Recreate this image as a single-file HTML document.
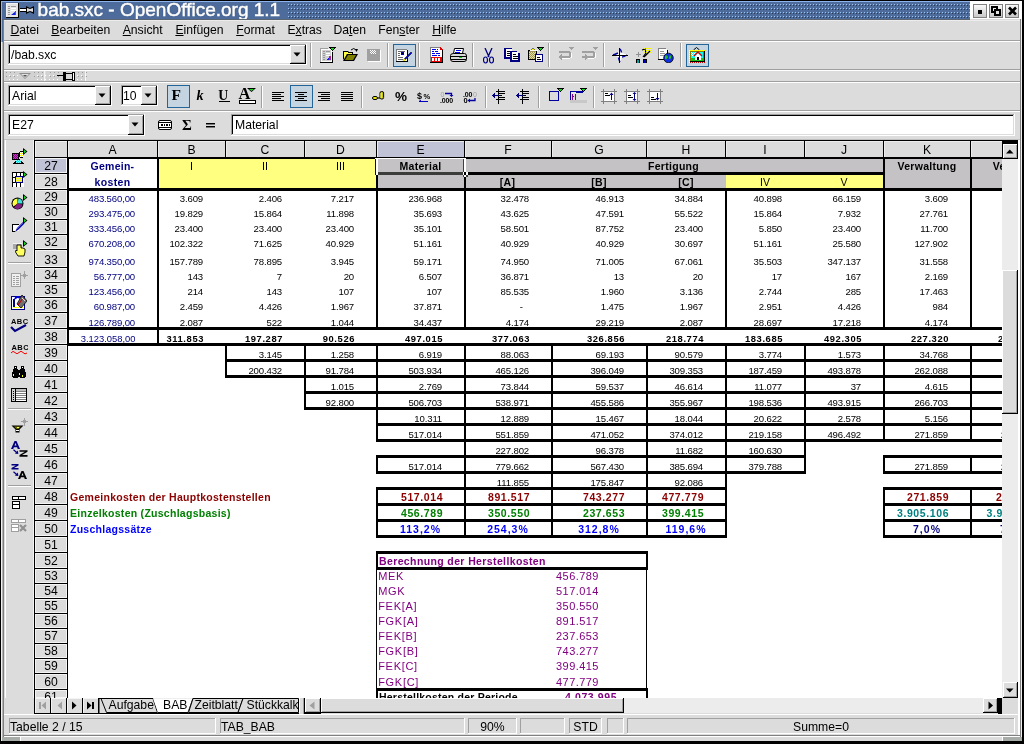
<!DOCTYPE html><html><head><meta charset="utf-8"><style>html,body{margin:0;padding:0;width:1024px;height:744px;overflow:hidden;background:#dcdcdc;}body{position:relative;font-family:"Liberation Sans",sans-serif;}div{position:absolute;box-sizing:border-box;}.t{white-space:nowrap;}u{text-decoration:underline;text-underline-offset:1px;}</style></head><body><div style="left:0;top:0;width:1024px;height:744px;overflow:hidden;will-change:transform;background:#dcdcdc"><div style="left:0px;top:0px;width:1024px;height:744px;background:#dcdcdc;"></div><div style="left:0px;top:0px;width:1024px;height:1px;background:#000;"></div><div style="left:0px;top:0px;width:1px;height:744px;background:#000;"></div><div style="left:1022px;top:0px;width:2px;height:744px;background:#000;"></div><div style="left:0px;top:741px;width:1024px;height:3px;background:#000;"></div><div style="left:1px;top:1px;width:1021px;height:18px;background:#4d6c9c;"></div><div style="left:1px;top:1px;width:1021px;height:1px;background:#8db4ec;"></div><div style="left:1px;top:1px;width:1px;height:41px;background:#8db4ec;"></div><div style="left:2px;top:2px;width:1px;height:40px;background:#4d6c9c;"></div><div style="left:3px;top:19px;width:1px;height:23px;background:#808080;"></div><svg style="position:absolute;left:288px;top:2px" width="682" height="17"><defs><pattern id="dp" x="0" y="0" width="3" height="4" patternUnits="userSpaceOnUse"><rect x="0" y="2" width="1" height="1" fill="#9cc4f4"/><rect x="1" y="3" width="1" height="1" fill="#2c3c58"/></pattern></defs><rect width="682" height="17" fill="url(#dp)"/></svg><svg style="position:absolute;left:5px;top:3px" width="32" height="16"><rect x="1" y="0" width="13" height="15" fill="#000"/><rect x="1" y="0" width="12" height="14" fill="#f4f4f4"/><rect x="2" y="1" width="11" height="13" fill="#e4e4e4"/><rect x="3" y="3" width="2" height="1" fill="#999"/><rect x="6" y="3" width="5" height="1" fill="#999"/><rect x="3" y="5" width="2" height="1" fill="#999"/><rect x="6" y="5" width="5" height="1" fill="#fff"/><rect x="3" y="7" width="2" height="1" fill="#999"/><rect x="6" y="7" width="5" height="1" fill="#fff"/><rect x="3" y="9" width="2" height="1" fill="#999"/><rect x="3" y="11" width="2" height="1" fill="#999"/><path d="M6 12 L11 8 L11 12 Z" fill="#1020e0"/><rect x="10" y="8" width="1" height="4" fill="#c02080"/><rect x="15" y="6" width="6" height="2" fill="#fff"/><rect x="15" y="5" width="6" height="1" fill="#000"/><rect x="15" y="8" width="6" height="1" fill="#000"/><path d="M21 3 L25 5 L29 3 L29 11 L25 9 L21 11 Z" fill="#000"/><path d="M22 5 L25 6 L28 5 L28 9 L25 8 L22 9 Z" fill="#ddd"/></svg><div class="t " style="left:37.6px;top:0.12px;font-size:19.0px;line-height:19.0px;color:#fff;-webkit-text-stroke:0.5px #fff;text-shadow:0 0 1px #1c2c48;">bab.sxc - OpenOffice.org 1.1</div><div style="left:970px;top:1px;width:52px;height:18px;background:#fff;"></div><div style="left:973px;top:4px;width:14px;height:14px;background:#808080;"></div><div style="left:974px;top:5px;width:12px;height:12px;background:linear-gradient(#fafafa,#c8c8c8);"></div><div style="left:989px;top:4px;width:14px;height:14px;background:#808080;"></div><div style="left:990px;top:5px;width:12px;height:12px;background:linear-gradient(#fafafa,#c8c8c8);"></div><div style="left:1005px;top:4px;width:14px;height:14px;background:#808080;"></div><div style="left:1006px;top:5px;width:12px;height:12px;background:linear-gradient(#fafafa,#c8c8c8);"></div><svg style="position:absolute;left:973px;top:4px" width="46" height="14" shape-rendering="crispEdges"><rect x="5" y="6" width="4" height="4" fill="#000"/><path d="M18 2h7v7h-7z M20 4v3h3v-3z" fill="#000" fill-rule="evenodd"/><rect x="21" y="5" width="7" height="7" fill="#000"/><rect x="23" y="7" width="3" height="3" fill="#e0e0e0"/></svg><svg style="position:absolute;left:1007px;top:6px" width="11" height="10"><path d="M2 1.5 L9 8.5 M9 1.5 L2 8.5" stroke="#000" stroke-width="2.6"/></svg><div style="left:4px;top:20px;width:1016px;height:1px;background:#ececec;"></div><div style="left:2px;top:19px;width:968px;height:1px;background:#5c6470;"></div><div style="left:4px;top:40px;width:1016px;height:1px;background:#a0a0a0;"></div><div style="left:4px;top:41px;width:1016px;height:1px;background:#ffffff;"></div><div style="left:1020px;top:19px;width:1px;height:718px;background:#808080;"></div><div style="left:1021px;top:19px;width:1px;height:718px;background:#f0f0f0;"></div><div class="t " style="left:10.5px;top:23.67px;font-size:12.2px;line-height:12.2px;color:#000;"><u>D</u>atei</div><div class="t " style="left:51.3px;top:23.67px;font-size:12.2px;line-height:12.2px;color:#000;"><u>B</u>earbeiten</div><div class="t " style="left:122.7px;top:23.67px;font-size:12.2px;line-height:12.2px;color:#000;"><u>A</u>nsicht</div><div class="t " style="left:175.4px;top:23.67px;font-size:12.2px;line-height:12.2px;color:#000;"><u>E</u>infügen</div><div class="t " style="left:236.2px;top:23.67px;font-size:12.2px;line-height:12.2px;color:#000;"><u>F</u>ormat</div><div class="t " style="left:287.4px;top:23.67px;font-size:12.2px;line-height:12.2px;color:#000;">E<u>x</u>tras</div><div class="t " style="left:333.4px;top:23.67px;font-size:12.2px;line-height:12.2px;color:#000;">Da<u>t</u>en</div><div class="t " style="left:378.3px;top:23.67px;font-size:12.2px;line-height:12.2px;color:#000;">Fen<u>s</u>ter</div><div class="t " style="left:432.2px;top:23.67px;font-size:12.2px;line-height:12.2px;color:#000;"><u>H</u>ilfe</div><div style="left:4px;top:69px;width:1016px;height:1px;background:#a0a0a0;"></div><div style="left:4px;top:70px;width:1016px;height:1px;background:#fff;"></div><div style="left:8px;top:44px;width:299px;height:21px;background:#fff;"></div><div style="left:8px;top:44px;width:298px;height:1px;background:#a0a0a0;"></div><div style="left:8px;top:44px;width:1px;height:20px;background:#a0a0a0;"></div><div style="left:9px;top:45px;width:297px;height:1px;background:#000;"></div><div style="left:9px;top:45px;width:1px;height:19px;background:#000;"></div><div style="left:9px;top:63px;width:297px;height:1px;background:#dcdcdc;"></div><div style="left:305px;top:45px;width:1px;height:19px;background:#dcdcdc;"></div><div style="left:10px;top:46px;width:295px;height:17px;background:#fff;"></div><div style="left:290px;top:45px;width:16px;height:19px;background:#000;"></div><div style="left:290px;top:45px;width:15px;height:18px;background:#fff;"></div><div style="left:291px;top:46px;width:14px;height:17px;background:#a0a0a0;"></div><div style="left:291px;top:46px;width:13px;height:16px;background:#dcdcdc;"></div><svg style="position:absolute;left:293px;top:52px" width="8" height="5"><path d="M0.5 0.5h7l-3.5 4z" fill="#000"/></svg><div class="t " style="left:11px;top:48.67px;font-size:12.2px;line-height:12.2px;color:#000;">/bab.sxc</div><div style="left:310px;top:43px;width:1px;height:24px;background:#a0a0a0;"></div><div style="left:311px;top:43px;width:1px;height:24px;background:#fff;"></div><div style="left:387px;top:43px;width:1px;height:24px;background:#a0a0a0;"></div><div style="left:388px;top:43px;width:1px;height:24px;background:#fff;"></div><div style="left:418px;top:43px;width:1px;height:24px;background:#a0a0a0;"></div><div style="left:419px;top:43px;width:1px;height:24px;background:#fff;"></div><div style="left:472px;top:43px;width:1px;height:24px;background:#a0a0a0;"></div><div style="left:473px;top:43px;width:1px;height:24px;background:#fff;"></div><div style="left:548px;top:43px;width:1px;height:24px;background:#a0a0a0;"></div><div style="left:549px;top:43px;width:1px;height:24px;background:#fff;"></div><div style="left:603px;top:43px;width:1px;height:24px;background:#a0a0a0;"></div><div style="left:604px;top:43px;width:1px;height:24px;background:#fff;"></div><div style="left:680px;top:43px;width:1px;height:24px;background:#a0a0a0;"></div><div style="left:681px;top:43px;width:1px;height:24px;background:#fff;"></div><div style="left:393px;top:44px;width:23px;height:23px;background:#236598;"></div><div style="left:394px;top:45px;width:21px;height:21px;background:#c4d4e0;"></div><div style="left:686px;top:44px;width:23px;height:23px;background:#236598;"></div><div style="left:687px;top:45px;width:21px;height:21px;background:#c4d4e0;"></div><div style="left:4px;top:71px;width:1016px;height:10px;background:#dcdcdc;"></div><div style="left:5px;top:71px;width:40px;height:10px;background:#d2d2d2;"></div><div style="left:44px;top:71px;width:1px;height:10px;background:#f4f4f4;"></div><div style="left:46px;top:71px;width:40px;height:10px;background:#d2d2d2;"></div><div style="left:85px;top:71px;width:1px;height:10px;background:#f4f4f4;"></div><svg style="position:absolute;left:4px;top:70px" width="90" height="12"><defs><pattern id="hd" width="4" height="4" patternUnits="userSpaceOnUse"><rect x="1" y="1" width="1" height="1" fill="#fff"/><rect x="2" y="2" width="1" height="1" fill="#9a9a9a"/></pattern></defs><rect x="2" y="2" width="12" height="8" fill="url(#hd)"/><rect x="30" y="2" width="12" height="8" fill="url(#hd)"/><rect x="43" y="2" width="12" height="8" fill="url(#hd)"/><rect x="73" y="2" width="12" height="8" fill="url(#hd)"/><path d="M15 3h12l-6 6z" fill="#8c8c8c"/><path d="M17 4h8l-4 4z" fill="#e0e0e0"/><path d="M19 5h4l-2 2z" fill="#555"/><rect x="53" y="5" width="8" height="1" fill="#000"/><rect x="59" y="2" width="3" height="9" fill="#000"/><rect x="61" y="3" width="9" height="7" fill="#000"/><rect x="62" y="4" width="7" height="5" fill="#d8d8d8"/><rect x="68" y="2" width="3" height="9" fill="#000"/><rect x="69" y="3" width="1" height="7" fill="#fff"/></svg><div style="left:4px;top:81px;width:1016px;height:1px;background:#a0a0a0;"></div><div style="left:4px;top:82px;width:1016px;height:1px;background:#fff;"></div><div style="left:4px;top:110px;width:1016px;height:1px;background:#a0a0a0;"></div><div style="left:4px;top:111px;width:1016px;height:1px;background:#fff;"></div><div style="left:8px;top:85px;width:104px;height:21px;background:#fff;"></div><div style="left:8px;top:85px;width:103px;height:1px;background:#a0a0a0;"></div><div style="left:8px;top:85px;width:1px;height:20px;background:#a0a0a0;"></div><div style="left:9px;top:86px;width:102px;height:1px;background:#000;"></div><div style="left:9px;top:86px;width:1px;height:19px;background:#000;"></div><div style="left:9px;top:104px;width:102px;height:1px;background:#dcdcdc;"></div><div style="left:110px;top:86px;width:1px;height:19px;background:#dcdcdc;"></div><div style="left:10px;top:87px;width:100px;height:17px;background:#fff;"></div><div style="left:95px;top:86px;width:16px;height:19px;background:#000;"></div><div style="left:95px;top:86px;width:15px;height:18px;background:#fff;"></div><div style="left:96px;top:87px;width:14px;height:17px;background:#a0a0a0;"></div><div style="left:96px;top:87px;width:13px;height:16px;background:#dcdcdc;"></div><svg style="position:absolute;left:98px;top:93px" width="8" height="5"><path d="M0.5 0.5h7l-3.5 4z" fill="#000"/></svg><div class="t " style="left:12px;top:89.67px;font-size:12.2px;line-height:12.2px;color:#000;">Arial</div><div style="left:121px;top:85px;width:37px;height:21px;background:#fff;"></div><div style="left:121px;top:85px;width:36px;height:1px;background:#a0a0a0;"></div><div style="left:121px;top:85px;width:1px;height:20px;background:#a0a0a0;"></div><div style="left:122px;top:86px;width:35px;height:1px;background:#000;"></div><div style="left:122px;top:86px;width:1px;height:19px;background:#000;"></div><div style="left:122px;top:104px;width:35px;height:1px;background:#dcdcdc;"></div><div style="left:156px;top:86px;width:1px;height:19px;background:#dcdcdc;"></div><div style="left:123px;top:87px;width:33px;height:17px;background:#fff;"></div><div style="left:141px;top:86px;width:16px;height:19px;background:#000;"></div><div style="left:141px;top:86px;width:15px;height:18px;background:#fff;"></div><div style="left:142px;top:87px;width:14px;height:17px;background:#a0a0a0;"></div><div style="left:142px;top:87px;width:13px;height:16px;background:#dcdcdc;"></div><svg style="position:absolute;left:144px;top:93px" width="8" height="5"><path d="M0.5 0.5h7l-3.5 4z" fill="#000"/></svg><div class="t " style="left:123px;top:89.67px;font-size:12.2px;line-height:12.2px;color:#000;">10</div><div style="left:167px;top:85px;width:23px;height:23px;background:#236598;"></div><div style="left:168px;top:86px;width:21px;height:21px;background:#c4d4e0;"></div><div style="left:290px;top:85px;width:23px;height:23px;background:#236598;"></div><div style="left:291px;top:86px;width:21px;height:21px;background:#c4d4e0;"></div><div style="left:261px;top:86px;width:1px;height:22px;background:#a0a0a0;"></div><div style="left:262px;top:86px;width:1px;height:22px;background:#fff;"></div><div style="left:361px;top:86px;width:1px;height:22px;background:#a0a0a0;"></div><div style="left:362px;top:86px;width:1px;height:22px;background:#fff;"></div><div style="left:485px;top:86px;width:1px;height:22px;background:#a0a0a0;"></div><div style="left:486px;top:86px;width:1px;height:22px;background:#fff;"></div><div style="left:538px;top:86px;width:1px;height:22px;background:#a0a0a0;"></div><div style="left:539px;top:86px;width:1px;height:22px;background:#fff;"></div><div style="left:593px;top:86px;width:1px;height:22px;background:#a0a0a0;"></div><div style="left:594px;top:86px;width:1px;height:22px;background:#fff;"></div><div style="left:8px;top:114px;width:137px;height:22px;background:#fff;"></div><div style="left:8px;top:114px;width:136px;height:1px;background:#a0a0a0;"></div><div style="left:8px;top:114px;width:1px;height:21px;background:#a0a0a0;"></div><div style="left:9px;top:115px;width:135px;height:1px;background:#000;"></div><div style="left:9px;top:115px;width:1px;height:20px;background:#000;"></div><div style="left:9px;top:134px;width:135px;height:1px;background:#dcdcdc;"></div><div style="left:143px;top:115px;width:1px;height:20px;background:#dcdcdc;"></div><div style="left:10px;top:116px;width:133px;height:18px;background:#fff;"></div><div style="left:128px;top:115px;width:16px;height:20px;background:#000;"></div><div style="left:128px;top:115px;width:15px;height:19px;background:#fff;"></div><div style="left:129px;top:116px;width:14px;height:18px;background:#a0a0a0;"></div><div style="left:129px;top:116px;width:13px;height:17px;background:#dcdcdc;"></div><svg style="position:absolute;left:131px;top:122px" width="8" height="5"><path d="M0.5 0.5h7l-3.5 4z" fill="#000"/></svg><div class="t " style="left:12px;top:118.67px;font-size:12.2px;line-height:12.2px;color:#000;">E27</div><div style="left:231px;top:114px;width:784px;height:22px;background:#fff;"></div><div style="left:231px;top:114px;width:783px;height:1px;background:#a0a0a0;"></div><div style="left:231px;top:114px;width:1px;height:21px;background:#a0a0a0;"></div><div style="left:232px;top:115px;width:782px;height:1px;background:#000;"></div><div style="left:232px;top:115px;width:1px;height:20px;background:#000;"></div><div style="left:232px;top:134px;width:782px;height:1px;background:#dcdcdc;"></div><div style="left:1013px;top:115px;width:1px;height:20px;background:#dcdcdc;"></div><div style="left:233px;top:116px;width:780px;height:18px;background:#fff;"></div><div style="left:4px;top:139px;width:1016px;height:1px;background:#c0c0c0;"></div><div class="t " style="left:235px;top:118.67px;font-size:12.2px;line-height:12.2px;color:#000;">Material</div><div style="left:67px;top:157px;width:935px;height:541px;background:#fff;"></div><div style="left:34px;top:140px;width:33px;height:558px;background:#dcdcdc;"></div><div style="left:34px;top:140px;width:1px;height:558px;background:#000;"></div><div style="left:67px;top:140px;width:1px;height:558px;background:#000;"></div><div style="left:34px;top:140px;width:968px;height:17px;background:#dcdcdc;"></div><div style="left:34px;top:140px;width:968px;height:1px;background:#000;"></div><div style="left:34px;top:157px;width:968px;height:1px;background:#000;"></div><div style="left:34px;top:140px;width:1px;height:17px;background:#000;"></div><div style="left:35px;top:141px;width:32px;height:1px;background:#f4f4f4;"></div><div style="left:35px;top:141px;width:1px;height:16px;background:#f4f4f4;"></div><div style="left:68px;top:141px;width:89px;height:16px;background:#dcdcdc;"></div><div style="left:68px;top:141px;width:89px;height:1px;background:#ececec;"></div><div style="left:68px;top:141px;width:1px;height:16px;background:#ececec;"></div><div style="left:67px;top:140px;width:1px;height:17px;background:#000;"></div><div class="t " style="left:82.5px;width:60px;text-align:center;top:143.67px;font-size:12.2px;line-height:12.2px;color:#000;">A</div><div style="left:158px;top:141px;width:67px;height:16px;background:#dcdcdc;"></div><div style="left:158px;top:141px;width:67px;height:1px;background:#ececec;"></div><div style="left:158px;top:141px;width:1px;height:16px;background:#ececec;"></div><div style="left:157px;top:140px;width:1px;height:17px;background:#000;"></div><div class="t " style="left:161.5px;width:60px;text-align:center;top:143.67px;font-size:12.2px;line-height:12.2px;color:#000;">B</div><div style="left:226px;top:141px;width:78px;height:16px;background:#dcdcdc;"></div><div style="left:226px;top:141px;width:78px;height:1px;background:#ececec;"></div><div style="left:226px;top:141px;width:1px;height:16px;background:#ececec;"></div><div style="left:225px;top:140px;width:1px;height:17px;background:#000;"></div><div class="t " style="left:235.0px;width:60px;text-align:center;top:143.67px;font-size:12.2px;line-height:12.2px;color:#000;">C</div><div style="left:305px;top:141px;width:71px;height:16px;background:#dcdcdc;"></div><div style="left:305px;top:141px;width:71px;height:1px;background:#ececec;"></div><div style="left:305px;top:141px;width:1px;height:16px;background:#ececec;"></div><div style="left:304px;top:140px;width:1px;height:17px;background:#000;"></div><div class="t " style="left:310.5px;width:60px;text-align:center;top:143.67px;font-size:12.2px;line-height:12.2px;color:#000;">D</div><div style="left:377px;top:141px;width:87px;height:16px;background:#c0c3d6;"></div><div style="left:377px;top:141px;width:87px;height:1px;background:#ececec;"></div><div style="left:377px;top:141px;width:1px;height:16px;background:#ececec;"></div><div style="left:376px;top:140px;width:1px;height:17px;background:#000;"></div><div class="t " style="left:390.5px;width:60px;text-align:center;top:143.67px;font-size:12.2px;line-height:12.2px;color:#000;">E</div><div style="left:465px;top:141px;width:86px;height:16px;background:#dcdcdc;"></div><div style="left:465px;top:141px;width:86px;height:1px;background:#ececec;"></div><div style="left:465px;top:141px;width:1px;height:16px;background:#ececec;"></div><div style="left:464px;top:140px;width:1px;height:17px;background:#000;"></div><div class="t " style="left:478.0px;width:60px;text-align:center;top:143.67px;font-size:12.2px;line-height:12.2px;color:#000;">F</div><div style="left:552px;top:141px;width:94px;height:16px;background:#dcdcdc;"></div><div style="left:552px;top:141px;width:94px;height:1px;background:#ececec;"></div><div style="left:552px;top:141px;width:1px;height:16px;background:#ececec;"></div><div style="left:551px;top:140px;width:1px;height:17px;background:#000;"></div><div class="t " style="left:569.0px;width:60px;text-align:center;top:143.67px;font-size:12.2px;line-height:12.2px;color:#000;">G</div><div style="left:647px;top:141px;width:78px;height:16px;background:#dcdcdc;"></div><div style="left:647px;top:141px;width:78px;height:1px;background:#ececec;"></div><div style="left:647px;top:141px;width:1px;height:16px;background:#ececec;"></div><div style="left:646px;top:140px;width:1px;height:17px;background:#000;"></div><div class="t " style="left:656.0px;width:60px;text-align:center;top:143.67px;font-size:12.2px;line-height:12.2px;color:#000;">H</div><div style="left:726px;top:141px;width:78px;height:16px;background:#dcdcdc;"></div><div style="left:726px;top:141px;width:78px;height:1px;background:#ececec;"></div><div style="left:726px;top:141px;width:1px;height:16px;background:#ececec;"></div><div style="left:725px;top:140px;width:1px;height:17px;background:#000;"></div><div class="t " style="left:735.0px;width:60px;text-align:center;top:143.67px;font-size:12.2px;line-height:12.2px;color:#000;">I</div><div style="left:805px;top:141px;width:78px;height:16px;background:#dcdcdc;"></div><div style="left:805px;top:141px;width:78px;height:1px;background:#ececec;"></div><div style="left:805px;top:141px;width:1px;height:16px;background:#ececec;"></div><div style="left:804px;top:140px;width:1px;height:17px;background:#000;"></div><div class="t " style="left:814.0px;width:60px;text-align:center;top:143.67px;font-size:12.2px;line-height:12.2px;color:#000;">J</div><div style="left:884px;top:141px;width:86px;height:16px;background:#dcdcdc;"></div><div style="left:884px;top:141px;width:86px;height:1px;background:#ececec;"></div><div style="left:884px;top:141px;width:1px;height:16px;background:#ececec;"></div><div style="left:883px;top:140px;width:1px;height:17px;background:#000;"></div><div class="t " style="left:897.0px;width:60px;text-align:center;top:143.67px;font-size:12.2px;line-height:12.2px;color:#000;">K</div><div style="left:971px;top:141px;width:31px;height:16px;background:#dcdcdc;"></div><div style="left:971px;top:141px;width:31px;height:1px;background:#ececec;"></div><div style="left:971px;top:141px;width:1px;height:16px;background:#ececec;"></div><div style="left:970px;top:140px;width:1px;height:17px;background:#000;"></div><div style="left:35px;top:158px;width:32px;height:15px;background:#c0c3d6;"></div><div style="left:35px;top:158px;width:32px;height:1px;background:#f4f4f4;"></div><div style="left:35px;top:158px;width:1px;height:15px;background:#f4f4f4;"></div><div style="left:66px;top:158px;width:1px;height:15px;background:#f4f4f4;"></div><div style="left:35px;top:172px;width:32px;height:1px;background:#f4f4f4;"></div><div style="left:34px;top:157px;width:34px;height:1px;background:#000;"></div><div class="t " style="left:31.0px;width:40px;text-align:center;top:159.67px;font-size:12.2px;line-height:12.2px;color:#000;">27</div><div style="left:35px;top:174px;width:32px;height:15px;background:#dcdcdc;"></div><div style="left:35px;top:174px;width:32px;height:1px;background:#f4f4f4;"></div><div style="left:35px;top:174px;width:1px;height:15px;background:#f4f4f4;"></div><div style="left:66px;top:174px;width:1px;height:15px;background:#f4f4f4;"></div><div style="left:35px;top:188px;width:32px;height:1px;background:#f4f4f4;"></div><div style="left:34px;top:173px;width:34px;height:1px;background:#000;"></div><div class="t " style="left:31.0px;width:40px;text-align:center;top:175.67px;font-size:12.2px;line-height:12.2px;color:#000;">28</div><div style="left:35px;top:190px;width:32px;height:14px;background:#dcdcdc;"></div><div style="left:35px;top:190px;width:32px;height:1px;background:#f4f4f4;"></div><div style="left:35px;top:190px;width:1px;height:14px;background:#f4f4f4;"></div><div style="left:66px;top:190px;width:1px;height:14px;background:#f4f4f4;"></div><div style="left:35px;top:203px;width:32px;height:1px;background:#f4f4f4;"></div><div style="left:34px;top:189px;width:34px;height:1px;background:#000;"></div><div class="t " style="left:31.0px;width:40px;text-align:center;top:190.67px;font-size:12.2px;line-height:12.2px;color:#000;">29</div><div style="left:35px;top:205px;width:32px;height:14px;background:#dcdcdc;"></div><div style="left:35px;top:205px;width:32px;height:1px;background:#f4f4f4;"></div><div style="left:35px;top:205px;width:1px;height:14px;background:#f4f4f4;"></div><div style="left:66px;top:205px;width:1px;height:14px;background:#f4f4f4;"></div><div style="left:35px;top:218px;width:32px;height:1px;background:#f4f4f4;"></div><div style="left:34px;top:204px;width:34px;height:1px;background:#000;"></div><div class="t " style="left:31.0px;width:40px;text-align:center;top:205.67px;font-size:12.2px;line-height:12.2px;color:#000;">30</div><div style="left:35px;top:220px;width:32px;height:14px;background:#dcdcdc;"></div><div style="left:35px;top:220px;width:32px;height:1px;background:#f4f4f4;"></div><div style="left:35px;top:220px;width:1px;height:14px;background:#f4f4f4;"></div><div style="left:66px;top:220px;width:1px;height:14px;background:#f4f4f4;"></div><div style="left:35px;top:233px;width:32px;height:1px;background:#f4f4f4;"></div><div style="left:34px;top:219px;width:34px;height:1px;background:#000;"></div><div class="t " style="left:31.0px;width:40px;text-align:center;top:220.67px;font-size:12.2px;line-height:12.2px;color:#000;">31</div><div style="left:35px;top:235px;width:32px;height:14px;background:#dcdcdc;"></div><div style="left:35px;top:235px;width:32px;height:1px;background:#f4f4f4;"></div><div style="left:35px;top:235px;width:1px;height:14px;background:#f4f4f4;"></div><div style="left:66px;top:235px;width:1px;height:14px;background:#f4f4f4;"></div><div style="left:35px;top:248px;width:32px;height:1px;background:#f4f4f4;"></div><div style="left:34px;top:234px;width:34px;height:1px;background:#000;"></div><div class="t " style="left:31.0px;width:40px;text-align:center;top:235.67px;font-size:12.2px;line-height:12.2px;color:#000;">32</div><div style="left:35px;top:250px;width:32px;height:17px;background:#dcdcdc;"></div><div style="left:35px;top:250px;width:32px;height:1px;background:#f4f4f4;"></div><div style="left:35px;top:250px;width:1px;height:17px;background:#f4f4f4;"></div><div style="left:66px;top:250px;width:1px;height:17px;background:#f4f4f4;"></div><div style="left:35px;top:266px;width:32px;height:1px;background:#f4f4f4;"></div><div style="left:34px;top:249px;width:34px;height:1px;background:#000;"></div><div class="t " style="left:31.0px;width:40px;text-align:center;top:253.67px;font-size:12.2px;line-height:12.2px;color:#000;">33</div><div style="left:35px;top:268px;width:32px;height:14px;background:#dcdcdc;"></div><div style="left:35px;top:268px;width:32px;height:1px;background:#f4f4f4;"></div><div style="left:35px;top:268px;width:1px;height:14px;background:#f4f4f4;"></div><div style="left:66px;top:268px;width:1px;height:14px;background:#f4f4f4;"></div><div style="left:35px;top:281px;width:32px;height:1px;background:#f4f4f4;"></div><div style="left:34px;top:267px;width:34px;height:1px;background:#000;"></div><div class="t " style="left:31.0px;width:40px;text-align:center;top:268.67px;font-size:12.2px;line-height:12.2px;color:#000;">34</div><div style="left:35px;top:283px;width:32px;height:14px;background:#dcdcdc;"></div><div style="left:35px;top:283px;width:32px;height:1px;background:#f4f4f4;"></div><div style="left:35px;top:283px;width:1px;height:14px;background:#f4f4f4;"></div><div style="left:66px;top:283px;width:1px;height:14px;background:#f4f4f4;"></div><div style="left:35px;top:296px;width:32px;height:1px;background:#f4f4f4;"></div><div style="left:34px;top:282px;width:34px;height:1px;background:#000;"></div><div class="t " style="left:31.0px;width:40px;text-align:center;top:283.67px;font-size:12.2px;line-height:12.2px;color:#000;">35</div><div style="left:35px;top:298px;width:32px;height:14px;background:#dcdcdc;"></div><div style="left:35px;top:298px;width:32px;height:1px;background:#f4f4f4;"></div><div style="left:35px;top:298px;width:1px;height:14px;background:#f4f4f4;"></div><div style="left:66px;top:298px;width:1px;height:14px;background:#f4f4f4;"></div><div style="left:35px;top:311px;width:32px;height:1px;background:#f4f4f4;"></div><div style="left:34px;top:297px;width:34px;height:1px;background:#000;"></div><div class="t " style="left:31.0px;width:40px;text-align:center;top:298.67px;font-size:12.2px;line-height:12.2px;color:#000;">36</div><div style="left:35px;top:313px;width:32px;height:15px;background:#dcdcdc;"></div><div style="left:35px;top:313px;width:32px;height:1px;background:#f4f4f4;"></div><div style="left:35px;top:313px;width:1px;height:15px;background:#f4f4f4;"></div><div style="left:66px;top:313px;width:1px;height:15px;background:#f4f4f4;"></div><div style="left:35px;top:327px;width:32px;height:1px;background:#f4f4f4;"></div><div style="left:34px;top:312px;width:34px;height:1px;background:#000;"></div><div class="t " style="left:31.0px;width:40px;text-align:center;top:314.67px;font-size:12.2px;line-height:12.2px;color:#000;">37</div><div style="left:35px;top:329px;width:32px;height:15px;background:#dcdcdc;"></div><div style="left:35px;top:329px;width:32px;height:1px;background:#f4f4f4;"></div><div style="left:35px;top:329px;width:1px;height:15px;background:#f4f4f4;"></div><div style="left:66px;top:329px;width:1px;height:15px;background:#f4f4f4;"></div><div style="left:35px;top:343px;width:32px;height:1px;background:#f4f4f4;"></div><div style="left:34px;top:328px;width:34px;height:1px;background:#000;"></div><div class="t " style="left:31.0px;width:40px;text-align:center;top:330.67px;font-size:12.2px;line-height:12.2px;color:#000;">38</div><div style="left:35px;top:345px;width:32px;height:15px;background:#dcdcdc;"></div><div style="left:35px;top:345px;width:32px;height:1px;background:#f4f4f4;"></div><div style="left:35px;top:345px;width:1px;height:15px;background:#f4f4f4;"></div><div style="left:66px;top:345px;width:1px;height:15px;background:#f4f4f4;"></div><div style="left:35px;top:359px;width:32px;height:1px;background:#f4f4f4;"></div><div style="left:34px;top:344px;width:34px;height:1px;background:#000;"></div><div class="t " style="left:31.0px;width:40px;text-align:center;top:346.67px;font-size:12.2px;line-height:12.2px;color:#000;">39</div><div style="left:35px;top:361px;width:32px;height:15px;background:#dcdcdc;"></div><div style="left:35px;top:361px;width:32px;height:1px;background:#f4f4f4;"></div><div style="left:35px;top:361px;width:1px;height:15px;background:#f4f4f4;"></div><div style="left:66px;top:361px;width:1px;height:15px;background:#f4f4f4;"></div><div style="left:35px;top:375px;width:32px;height:1px;background:#f4f4f4;"></div><div style="left:34px;top:360px;width:34px;height:1px;background:#000;"></div><div class="t " style="left:31.0px;width:40px;text-align:center;top:362.67px;font-size:12.2px;line-height:12.2px;color:#000;">40</div><div style="left:35px;top:377px;width:32px;height:15px;background:#dcdcdc;"></div><div style="left:35px;top:377px;width:32px;height:1px;background:#f4f4f4;"></div><div style="left:35px;top:377px;width:1px;height:15px;background:#f4f4f4;"></div><div style="left:66px;top:377px;width:1px;height:15px;background:#f4f4f4;"></div><div style="left:35px;top:391px;width:32px;height:1px;background:#f4f4f4;"></div><div style="left:34px;top:376px;width:34px;height:1px;background:#000;"></div><div class="t " style="left:31.0px;width:40px;text-align:center;top:378.67px;font-size:12.2px;line-height:12.2px;color:#000;">41</div><div style="left:35px;top:393px;width:32px;height:15px;background:#dcdcdc;"></div><div style="left:35px;top:393px;width:32px;height:1px;background:#f4f4f4;"></div><div style="left:35px;top:393px;width:1px;height:15px;background:#f4f4f4;"></div><div style="left:66px;top:393px;width:1px;height:15px;background:#f4f4f4;"></div><div style="left:35px;top:407px;width:32px;height:1px;background:#f4f4f4;"></div><div style="left:34px;top:392px;width:34px;height:1px;background:#000;"></div><div class="t " style="left:31.0px;width:40px;text-align:center;top:394.67px;font-size:12.2px;line-height:12.2px;color:#000;">42</div><div style="left:35px;top:409px;width:32px;height:15px;background:#dcdcdc;"></div><div style="left:35px;top:409px;width:32px;height:1px;background:#f4f4f4;"></div><div style="left:35px;top:409px;width:1px;height:15px;background:#f4f4f4;"></div><div style="left:66px;top:409px;width:1px;height:15px;background:#f4f4f4;"></div><div style="left:35px;top:423px;width:32px;height:1px;background:#f4f4f4;"></div><div style="left:34px;top:408px;width:34px;height:1px;background:#000;"></div><div class="t " style="left:31.0px;width:40px;text-align:center;top:410.67px;font-size:12.2px;line-height:12.2px;color:#000;">43</div><div style="left:35px;top:425px;width:32px;height:15px;background:#dcdcdc;"></div><div style="left:35px;top:425px;width:32px;height:1px;background:#f4f4f4;"></div><div style="left:35px;top:425px;width:1px;height:15px;background:#f4f4f4;"></div><div style="left:66px;top:425px;width:1px;height:15px;background:#f4f4f4;"></div><div style="left:35px;top:439px;width:32px;height:1px;background:#f4f4f4;"></div><div style="left:34px;top:424px;width:34px;height:1px;background:#000;"></div><div class="t " style="left:31.0px;width:40px;text-align:center;top:426.67px;font-size:12.2px;line-height:12.2px;color:#000;">44</div><div style="left:35px;top:441px;width:32px;height:15px;background:#dcdcdc;"></div><div style="left:35px;top:441px;width:32px;height:1px;background:#f4f4f4;"></div><div style="left:35px;top:441px;width:1px;height:15px;background:#f4f4f4;"></div><div style="left:66px;top:441px;width:1px;height:15px;background:#f4f4f4;"></div><div style="left:35px;top:455px;width:32px;height:1px;background:#f4f4f4;"></div><div style="left:34px;top:440px;width:34px;height:1px;background:#000;"></div><div class="t " style="left:31.0px;width:40px;text-align:center;top:442.67px;font-size:12.2px;line-height:12.2px;color:#000;">45</div><div style="left:35px;top:457px;width:32px;height:15px;background:#dcdcdc;"></div><div style="left:35px;top:457px;width:32px;height:1px;background:#f4f4f4;"></div><div style="left:35px;top:457px;width:1px;height:15px;background:#f4f4f4;"></div><div style="left:66px;top:457px;width:1px;height:15px;background:#f4f4f4;"></div><div style="left:35px;top:471px;width:32px;height:1px;background:#f4f4f4;"></div><div style="left:34px;top:456px;width:34px;height:1px;background:#000;"></div><div class="t " style="left:31.0px;width:40px;text-align:center;top:458.67px;font-size:12.2px;line-height:12.2px;color:#000;">46</div><div style="left:35px;top:473px;width:32px;height:15px;background:#dcdcdc;"></div><div style="left:35px;top:473px;width:32px;height:1px;background:#f4f4f4;"></div><div style="left:35px;top:473px;width:1px;height:15px;background:#f4f4f4;"></div><div style="left:66px;top:473px;width:1px;height:15px;background:#f4f4f4;"></div><div style="left:35px;top:487px;width:32px;height:1px;background:#f4f4f4;"></div><div style="left:34px;top:472px;width:34px;height:1px;background:#000;"></div><div class="t " style="left:31.0px;width:40px;text-align:center;top:474.67px;font-size:12.2px;line-height:12.2px;color:#000;">47</div><div style="left:35px;top:489px;width:32px;height:15px;background:#dcdcdc;"></div><div style="left:35px;top:489px;width:32px;height:1px;background:#f4f4f4;"></div><div style="left:35px;top:489px;width:1px;height:15px;background:#f4f4f4;"></div><div style="left:66px;top:489px;width:1px;height:15px;background:#f4f4f4;"></div><div style="left:35px;top:503px;width:32px;height:1px;background:#f4f4f4;"></div><div style="left:34px;top:488px;width:34px;height:1px;background:#000;"></div><div class="t " style="left:31.0px;width:40px;text-align:center;top:490.67px;font-size:12.2px;line-height:12.2px;color:#000;">48</div><div style="left:35px;top:505px;width:32px;height:15px;background:#dcdcdc;"></div><div style="left:35px;top:505px;width:32px;height:1px;background:#f4f4f4;"></div><div style="left:35px;top:505px;width:1px;height:15px;background:#f4f4f4;"></div><div style="left:66px;top:505px;width:1px;height:15px;background:#f4f4f4;"></div><div style="left:35px;top:519px;width:32px;height:1px;background:#f4f4f4;"></div><div style="left:34px;top:504px;width:34px;height:1px;background:#000;"></div><div class="t " style="left:31.0px;width:40px;text-align:center;top:506.67px;font-size:12.2px;line-height:12.2px;color:#000;">49</div><div style="left:35px;top:521px;width:32px;height:15px;background:#dcdcdc;"></div><div style="left:35px;top:521px;width:32px;height:1px;background:#f4f4f4;"></div><div style="left:35px;top:521px;width:1px;height:15px;background:#f4f4f4;"></div><div style="left:66px;top:521px;width:1px;height:15px;background:#f4f4f4;"></div><div style="left:35px;top:535px;width:32px;height:1px;background:#f4f4f4;"></div><div style="left:34px;top:520px;width:34px;height:1px;background:#000;"></div><div class="t " style="left:31.0px;width:40px;text-align:center;top:522.67px;font-size:12.2px;line-height:12.2px;color:#000;">50</div><div style="left:35px;top:537px;width:32px;height:15px;background:#dcdcdc;"></div><div style="left:35px;top:537px;width:32px;height:1px;background:#f4f4f4;"></div><div style="left:35px;top:537px;width:1px;height:15px;background:#f4f4f4;"></div><div style="left:66px;top:537px;width:1px;height:15px;background:#f4f4f4;"></div><div style="left:35px;top:551px;width:32px;height:1px;background:#f4f4f4;"></div><div style="left:34px;top:536px;width:34px;height:1px;background:#000;"></div><div class="t " style="left:31.0px;width:40px;text-align:center;top:538.67px;font-size:12.2px;line-height:12.2px;color:#000;">51</div><div style="left:35px;top:553px;width:32px;height:15px;background:#dcdcdc;"></div><div style="left:35px;top:553px;width:32px;height:1px;background:#f4f4f4;"></div><div style="left:35px;top:553px;width:1px;height:15px;background:#f4f4f4;"></div><div style="left:66px;top:553px;width:1px;height:15px;background:#f4f4f4;"></div><div style="left:35px;top:567px;width:32px;height:1px;background:#f4f4f4;"></div><div style="left:34px;top:552px;width:34px;height:1px;background:#000;"></div><div class="t " style="left:31.0px;width:40px;text-align:center;top:554.67px;font-size:12.2px;line-height:12.2px;color:#000;">52</div><div style="left:35px;top:569px;width:32px;height:14px;background:#dcdcdc;"></div><div style="left:35px;top:569px;width:32px;height:1px;background:#f4f4f4;"></div><div style="left:35px;top:569px;width:1px;height:14px;background:#f4f4f4;"></div><div style="left:66px;top:569px;width:1px;height:14px;background:#f4f4f4;"></div><div style="left:35px;top:582px;width:32px;height:1px;background:#f4f4f4;"></div><div style="left:34px;top:568px;width:34px;height:1px;background:#000;"></div><div class="t " style="left:31.0px;width:40px;text-align:center;top:569.67px;font-size:12.2px;line-height:12.2px;color:#000;">53</div><div style="left:35px;top:584px;width:32px;height:14px;background:#dcdcdc;"></div><div style="left:35px;top:584px;width:32px;height:1px;background:#f4f4f4;"></div><div style="left:35px;top:584px;width:1px;height:14px;background:#f4f4f4;"></div><div style="left:66px;top:584px;width:1px;height:14px;background:#f4f4f4;"></div><div style="left:35px;top:597px;width:32px;height:1px;background:#f4f4f4;"></div><div style="left:34px;top:583px;width:34px;height:1px;background:#000;"></div><div class="t " style="left:31.0px;width:40px;text-align:center;top:584.67px;font-size:12.2px;line-height:12.2px;color:#000;">54</div><div style="left:35px;top:599px;width:32px;height:14px;background:#dcdcdc;"></div><div style="left:35px;top:599px;width:32px;height:1px;background:#f4f4f4;"></div><div style="left:35px;top:599px;width:1px;height:14px;background:#f4f4f4;"></div><div style="left:66px;top:599px;width:1px;height:14px;background:#f4f4f4;"></div><div style="left:35px;top:612px;width:32px;height:1px;background:#f4f4f4;"></div><div style="left:34px;top:598px;width:34px;height:1px;background:#000;"></div><div class="t " style="left:31.0px;width:40px;text-align:center;top:599.67px;font-size:12.2px;line-height:12.2px;color:#000;">55</div><div style="left:35px;top:614px;width:32px;height:14px;background:#dcdcdc;"></div><div style="left:35px;top:614px;width:32px;height:1px;background:#f4f4f4;"></div><div style="left:35px;top:614px;width:1px;height:14px;background:#f4f4f4;"></div><div style="left:66px;top:614px;width:1px;height:14px;background:#f4f4f4;"></div><div style="left:35px;top:627px;width:32px;height:1px;background:#f4f4f4;"></div><div style="left:34px;top:613px;width:34px;height:1px;background:#000;"></div><div class="t " style="left:31.0px;width:40px;text-align:center;top:614.67px;font-size:12.2px;line-height:12.2px;color:#000;">56</div><div style="left:35px;top:629px;width:32px;height:14px;background:#dcdcdc;"></div><div style="left:35px;top:629px;width:32px;height:1px;background:#f4f4f4;"></div><div style="left:35px;top:629px;width:1px;height:14px;background:#f4f4f4;"></div><div style="left:66px;top:629px;width:1px;height:14px;background:#f4f4f4;"></div><div style="left:35px;top:642px;width:32px;height:1px;background:#f4f4f4;"></div><div style="left:34px;top:628px;width:34px;height:1px;background:#000;"></div><div class="t " style="left:31.0px;width:40px;text-align:center;top:629.67px;font-size:12.2px;line-height:12.2px;color:#000;">57</div><div style="left:35px;top:644px;width:32px;height:14px;background:#dcdcdc;"></div><div style="left:35px;top:644px;width:32px;height:1px;background:#f4f4f4;"></div><div style="left:35px;top:644px;width:1px;height:14px;background:#f4f4f4;"></div><div style="left:66px;top:644px;width:1px;height:14px;background:#f4f4f4;"></div><div style="left:35px;top:657px;width:32px;height:1px;background:#f4f4f4;"></div><div style="left:34px;top:643px;width:34px;height:1px;background:#000;"></div><div class="t " style="left:31.0px;width:40px;text-align:center;top:644.67px;font-size:12.2px;line-height:12.2px;color:#000;">58</div><div style="left:35px;top:659px;width:32px;height:14px;background:#dcdcdc;"></div><div style="left:35px;top:659px;width:32px;height:1px;background:#f4f4f4;"></div><div style="left:35px;top:659px;width:1px;height:14px;background:#f4f4f4;"></div><div style="left:66px;top:659px;width:1px;height:14px;background:#f4f4f4;"></div><div style="left:35px;top:672px;width:32px;height:1px;background:#f4f4f4;"></div><div style="left:34px;top:658px;width:34px;height:1px;background:#000;"></div><div class="t " style="left:31.0px;width:40px;text-align:center;top:659.67px;font-size:12.2px;line-height:12.2px;color:#000;">59</div><div style="left:35px;top:674px;width:32px;height:15px;background:#dcdcdc;"></div><div style="left:35px;top:674px;width:32px;height:1px;background:#f4f4f4;"></div><div style="left:35px;top:674px;width:1px;height:15px;background:#f4f4f4;"></div><div style="left:66px;top:674px;width:1px;height:15px;background:#f4f4f4;"></div><div style="left:35px;top:688px;width:32px;height:1px;background:#f4f4f4;"></div><div style="left:34px;top:673px;width:34px;height:1px;background:#000;"></div><div class="t " style="left:31.0px;width:40px;text-align:center;top:675.67px;font-size:12.2px;line-height:12.2px;color:#000;">60</div><div style="left:35px;top:690px;width:32px;height:8px;background:#dcdcdc;"></div><div style="left:35px;top:690px;width:32px;height:1px;background:#f4f4f4;"></div><div style="left:35px;top:690px;width:1px;height:8px;background:#f4f4f4;"></div><div style="left:66px;top:690px;width:1px;height:8px;background:#f4f4f4;"></div><div style="left:35px;top:697px;width:32px;height:1px;background:#f4f4f4;"></div><div style="left:34px;top:689px;width:34px;height:1px;background:#000;"></div><div class="t " style="left:31.0px;width:40px;text-align:center;top:690.67px;font-size:12.2px;line-height:12.2px;color:#000;">61</div><div style="left:0;top:0;width:1024px;height:744px;clip-path:inset(157px 22px 46px 67px)"><div style="left:158px;top:157px;width:219px;height:32px;background:#ffff80;"></div><div style="left:377px;top:157px;width:88px;height:32px;background:#c4c2c4;"></div><div style="left:465px;top:157px;width:419px;height:16px;background:#c4c2c4;"></div><div style="left:465px;top:173px;width:261px;height:16px;background:#c4c2c4;"></div><div style="left:726px;top:173px;width:158px;height:16px;background:#ffff80;"></div><div style="left:884px;top:157px;width:174px;height:32px;background:#c4c2c4;"></div><div class="t " style="left:-37.5px;width:300px;text-align:center;top:161.11px;font-size:10.5px;line-height:10.5px;color:#000080;font-weight:bold;letter-spacing:0.25px;">Gemein-</div><div class="t " style="left:-37.5px;width:300px;text-align:center;top:176.61px;font-size:10.5px;line-height:10.5px;color:#000080;font-weight:bold;letter-spacing:0.35px;">kosten</div><div style="left:191px;top:162px;width:1px;height:8px;background:#000;"></div><div style="left:263px;top:162px;width:1px;height:8px;background:#000;"></div><div style="left:266px;top:162px;width:1px;height:8px;background:#000;"></div><div style="left:337px;top:162px;width:1px;height:8px;background:#000;"></div><div style="left:340px;top:162px;width:1px;height:8px;background:#000;"></div><div style="left:343px;top:162px;width:1px;height:8px;background:#000;"></div><div class="t " style="left:270.5px;width:300px;text-align:center;top:160.71px;font-size:10.5px;line-height:10.5px;color:#000;font-weight:bold;letter-spacing:0.3px;">Material</div><div class="t " style="left:523.5px;width:300px;text-align:center;top:160.71px;font-size:10.5px;line-height:10.5px;color:#000;font-weight:bold;letter-spacing:0.3px;">Fertigung</div><div class="t " style="left:777.0px;width:300px;text-align:center;top:160.71px;font-size:10.5px;line-height:10.5px;color:#000;font-weight:bold;letter-spacing:0.3px;">Verwaltung</div><div class="t " style="left:863.5px;width:300px;text-align:center;top:160.71px;font-size:10.5px;line-height:10.5px;color:#000;font-weight:bold;letter-spacing:0.3px;">Vertrieb</div><div class="t " style="left:357.5px;width:300px;text-align:center;top:176.61px;font-size:10.5px;line-height:10.5px;color:#000;font-weight:bold;letter-spacing:0.3px;">[A]</div><div class="t " style="left:449.0px;width:300px;text-align:center;top:176.61px;font-size:10.5px;line-height:10.5px;color:#000;font-weight:bold;letter-spacing:0.3px;">[B]</div><div class="t " style="left:536.0px;width:300px;text-align:center;top:176.61px;font-size:10.5px;line-height:10.5px;color:#000;font-weight:bold;letter-spacing:0.3px;">[C]</div><div class="t " style="left:615.0px;width:300px;text-align:center;top:176.61px;font-size:10.5px;line-height:10.5px;color:#000;">IV</div><div class="t " style="left:694.0px;width:300px;text-align:center;top:176.61px;font-size:10.5px;line-height:10.5px;color:#000;">V</div><div class="t " style="left:55.04999999999999px;width:80px;text-align:right;top:193.87px;font-size:9.6px;line-height:9.6px;color:#000080;letter-spacing:-0.15px;">483.560,00</div><div class="t " style="left:123.04999999999998px;width:80px;text-align:right;top:193.87px;font-size:9.6px;line-height:9.6px;color:#000;letter-spacing:-0.15px;">3.609</div><div class="t " style="left:202.04999999999998px;width:80px;text-align:right;top:193.87px;font-size:9.6px;line-height:9.6px;color:#000;letter-spacing:-0.15px;">2.406</div><div class="t " style="left:274.05px;width:80px;text-align:right;top:193.87px;font-size:9.6px;line-height:9.6px;color:#000;letter-spacing:-0.15px;">7.217</div><div class="t " style="left:362.05px;width:80px;text-align:right;top:193.87px;font-size:9.6px;line-height:9.6px;color:#000;letter-spacing:-0.15px;">236.968</div><div class="t " style="left:449.05000000000007px;width:80px;text-align:right;top:193.87px;font-size:9.6px;line-height:9.6px;color:#000;letter-spacing:-0.15px;">32.478</div><div class="t " style="left:544.0500000000001px;width:80px;text-align:right;top:193.87px;font-size:9.6px;line-height:9.6px;color:#000;letter-spacing:-0.15px;">46.913</div><div class="t " style="left:623.0500000000001px;width:80px;text-align:right;top:193.87px;font-size:9.6px;line-height:9.6px;color:#000;letter-spacing:-0.15px;">34.884</div><div class="t " style="left:702.0500000000001px;width:80px;text-align:right;top:193.87px;font-size:9.6px;line-height:9.6px;color:#000;letter-spacing:-0.15px;">40.898</div><div class="t " style="left:781.0500000000001px;width:80px;text-align:right;top:193.87px;font-size:9.6px;line-height:9.6px;color:#000;letter-spacing:-0.15px;">66.159</div><div class="t " style="left:868.0500000000001px;width:80px;text-align:right;top:193.87px;font-size:9.6px;line-height:9.6px;color:#000;letter-spacing:-0.15px;">3.609</div><div class="t " style="left:55.04999999999999px;width:80px;text-align:right;top:208.87px;font-size:9.6px;line-height:9.6px;color:#000080;letter-spacing:-0.15px;">293.475,00</div><div class="t " style="left:123.04999999999998px;width:80px;text-align:right;top:208.87px;font-size:9.6px;line-height:9.6px;color:#000;letter-spacing:-0.15px;">19.829</div><div class="t " style="left:202.04999999999998px;width:80px;text-align:right;top:208.87px;font-size:9.6px;line-height:9.6px;color:#000;letter-spacing:-0.15px;">15.864</div><div class="t " style="left:274.05px;width:80px;text-align:right;top:208.87px;font-size:9.6px;line-height:9.6px;color:#000;letter-spacing:-0.15px;">11.898</div><div class="t " style="left:362.05px;width:80px;text-align:right;top:208.87px;font-size:9.6px;line-height:9.6px;color:#000;letter-spacing:-0.15px;">35.693</div><div class="t " style="left:449.05000000000007px;width:80px;text-align:right;top:208.87px;font-size:9.6px;line-height:9.6px;color:#000;letter-spacing:-0.15px;">43.625</div><div class="t " style="left:544.0500000000001px;width:80px;text-align:right;top:208.87px;font-size:9.6px;line-height:9.6px;color:#000;letter-spacing:-0.15px;">47.591</div><div class="t " style="left:623.0500000000001px;width:80px;text-align:right;top:208.87px;font-size:9.6px;line-height:9.6px;color:#000;letter-spacing:-0.15px;">55.522</div><div class="t " style="left:702.0500000000001px;width:80px;text-align:right;top:208.87px;font-size:9.6px;line-height:9.6px;color:#000;letter-spacing:-0.15px;">15.864</div><div class="t " style="left:781.0500000000001px;width:80px;text-align:right;top:208.87px;font-size:9.6px;line-height:9.6px;color:#000;letter-spacing:-0.15px;">7.932</div><div class="t " style="left:868.0500000000001px;width:80px;text-align:right;top:208.87px;font-size:9.6px;line-height:9.6px;color:#000;letter-spacing:-0.15px;">27.761</div><div class="t " style="left:55.04999999999999px;width:80px;text-align:right;top:223.87px;font-size:9.6px;line-height:9.6px;color:#000080;letter-spacing:-0.15px;">333.456,00</div><div class="t " style="left:123.04999999999998px;width:80px;text-align:right;top:223.87px;font-size:9.6px;line-height:9.6px;color:#000;letter-spacing:-0.15px;">23.400</div><div class="t " style="left:202.04999999999998px;width:80px;text-align:right;top:223.87px;font-size:9.6px;line-height:9.6px;color:#000;letter-spacing:-0.15px;">23.400</div><div class="t " style="left:274.05px;width:80px;text-align:right;top:223.87px;font-size:9.6px;line-height:9.6px;color:#000;letter-spacing:-0.15px;">23.400</div><div class="t " style="left:362.05px;width:80px;text-align:right;top:223.87px;font-size:9.6px;line-height:9.6px;color:#000;letter-spacing:-0.15px;">35.101</div><div class="t " style="left:449.05000000000007px;width:80px;text-align:right;top:223.87px;font-size:9.6px;line-height:9.6px;color:#000;letter-spacing:-0.15px;">58.501</div><div class="t " style="left:544.0500000000001px;width:80px;text-align:right;top:223.87px;font-size:9.6px;line-height:9.6px;color:#000;letter-spacing:-0.15px;">87.752</div><div class="t " style="left:623.0500000000001px;width:80px;text-align:right;top:223.87px;font-size:9.6px;line-height:9.6px;color:#000;letter-spacing:-0.15px;">23.400</div><div class="t " style="left:702.0500000000001px;width:80px;text-align:right;top:223.87px;font-size:9.6px;line-height:9.6px;color:#000;letter-spacing:-0.15px;">5.850</div><div class="t " style="left:781.0500000000001px;width:80px;text-align:right;top:223.87px;font-size:9.6px;line-height:9.6px;color:#000;letter-spacing:-0.15px;">23.400</div><div class="t " style="left:868.0500000000001px;width:80px;text-align:right;top:223.87px;font-size:9.6px;line-height:9.6px;color:#000;letter-spacing:-0.15px;">11.700</div><div class="t " style="left:55.04999999999999px;width:80px;text-align:right;top:238.87px;font-size:9.6px;line-height:9.6px;color:#000080;letter-spacing:-0.15px;">670.208,00</div><div class="t " style="left:123.04999999999998px;width:80px;text-align:right;top:238.87px;font-size:9.6px;line-height:9.6px;color:#000;letter-spacing:-0.15px;">102.322</div><div class="t " style="left:202.04999999999998px;width:80px;text-align:right;top:238.87px;font-size:9.6px;line-height:9.6px;color:#000;letter-spacing:-0.15px;">71.625</div><div class="t " style="left:274.05px;width:80px;text-align:right;top:238.87px;font-size:9.6px;line-height:9.6px;color:#000;letter-spacing:-0.15px;">40.929</div><div class="t " style="left:362.05px;width:80px;text-align:right;top:238.87px;font-size:9.6px;line-height:9.6px;color:#000;letter-spacing:-0.15px;">51.161</div><div class="t " style="left:449.05000000000007px;width:80px;text-align:right;top:238.87px;font-size:9.6px;line-height:9.6px;color:#000;letter-spacing:-0.15px;">40.929</div><div class="t " style="left:544.0500000000001px;width:80px;text-align:right;top:238.87px;font-size:9.6px;line-height:9.6px;color:#000;letter-spacing:-0.15px;">40.929</div><div class="t " style="left:623.0500000000001px;width:80px;text-align:right;top:238.87px;font-size:9.6px;line-height:9.6px;color:#000;letter-spacing:-0.15px;">30.697</div><div class="t " style="left:702.0500000000001px;width:80px;text-align:right;top:238.87px;font-size:9.6px;line-height:9.6px;color:#000;letter-spacing:-0.15px;">51.161</div><div class="t " style="left:781.0500000000001px;width:80px;text-align:right;top:238.87px;font-size:9.6px;line-height:9.6px;color:#000;letter-spacing:-0.15px;">25.580</div><div class="t " style="left:868.0500000000001px;width:80px;text-align:right;top:238.87px;font-size:9.6px;line-height:9.6px;color:#000;letter-spacing:-0.15px;">127.902</div><div class="t " style="left:55.04999999999999px;width:80px;text-align:right;top:256.87px;font-size:9.6px;line-height:9.6px;color:#000080;letter-spacing:-0.15px;">974.350,00</div><div class="t " style="left:123.04999999999998px;width:80px;text-align:right;top:256.87px;font-size:9.6px;line-height:9.6px;color:#000;letter-spacing:-0.15px;">157.789</div><div class="t " style="left:202.04999999999998px;width:80px;text-align:right;top:256.87px;font-size:9.6px;line-height:9.6px;color:#000;letter-spacing:-0.15px;">78.895</div><div class="t " style="left:274.05px;width:80px;text-align:right;top:256.87px;font-size:9.6px;line-height:9.6px;color:#000;letter-spacing:-0.15px;">3.945</div><div class="t " style="left:362.05px;width:80px;text-align:right;top:256.87px;font-size:9.6px;line-height:9.6px;color:#000;letter-spacing:-0.15px;">59.171</div><div class="t " style="left:449.05000000000007px;width:80px;text-align:right;top:256.87px;font-size:9.6px;line-height:9.6px;color:#000;letter-spacing:-0.15px;">74.950</div><div class="t " style="left:544.0500000000001px;width:80px;text-align:right;top:256.87px;font-size:9.6px;line-height:9.6px;color:#000;letter-spacing:-0.15px;">71.005</div><div class="t " style="left:623.0500000000001px;width:80px;text-align:right;top:256.87px;font-size:9.6px;line-height:9.6px;color:#000;letter-spacing:-0.15px;">67.061</div><div class="t " style="left:702.0500000000001px;width:80px;text-align:right;top:256.87px;font-size:9.6px;line-height:9.6px;color:#000;letter-spacing:-0.15px;">35.503</div><div class="t " style="left:781.0500000000001px;width:80px;text-align:right;top:256.87px;font-size:9.6px;line-height:9.6px;color:#000;letter-spacing:-0.15px;">347.137</div><div class="t " style="left:868.0500000000001px;width:80px;text-align:right;top:256.87px;font-size:9.6px;line-height:9.6px;color:#000;letter-spacing:-0.15px;">31.558</div><div class="t " style="left:55.04999999999999px;width:80px;text-align:right;top:271.87px;font-size:9.6px;line-height:9.6px;color:#000080;letter-spacing:-0.15px;">56.777,00</div><div class="t " style="left:123.04999999999998px;width:80px;text-align:right;top:271.87px;font-size:9.6px;line-height:9.6px;color:#000;letter-spacing:-0.15px;">143</div><div class="t " style="left:202.04999999999998px;width:80px;text-align:right;top:271.87px;font-size:9.6px;line-height:9.6px;color:#000;letter-spacing:-0.15px;">7</div><div class="t " style="left:274.05px;width:80px;text-align:right;top:271.87px;font-size:9.6px;line-height:9.6px;color:#000;letter-spacing:-0.15px;">20</div><div class="t " style="left:362.05px;width:80px;text-align:right;top:271.87px;font-size:9.6px;line-height:9.6px;color:#000;letter-spacing:-0.15px;">6.507</div><div class="t " style="left:449.05000000000007px;width:80px;text-align:right;top:271.87px;font-size:9.6px;line-height:9.6px;color:#000;letter-spacing:-0.15px;">36.871</div><div class="t " style="left:544.0500000000001px;width:80px;text-align:right;top:271.87px;font-size:9.6px;line-height:9.6px;color:#000;letter-spacing:-0.15px;">13</div><div class="t " style="left:623.0500000000001px;width:80px;text-align:right;top:271.87px;font-size:9.6px;line-height:9.6px;color:#000;letter-spacing:-0.15px;">20</div><div class="t " style="left:702.0500000000001px;width:80px;text-align:right;top:271.87px;font-size:9.6px;line-height:9.6px;color:#000;letter-spacing:-0.15px;">17</div><div class="t " style="left:781.0500000000001px;width:80px;text-align:right;top:271.87px;font-size:9.6px;line-height:9.6px;color:#000;letter-spacing:-0.15px;">167</div><div class="t " style="left:868.0500000000001px;width:80px;text-align:right;top:271.87px;font-size:9.6px;line-height:9.6px;color:#000;letter-spacing:-0.15px;">2.169</div><div class="t " style="left:55.04999999999999px;width:80px;text-align:right;top:286.87px;font-size:9.6px;line-height:9.6px;color:#000080;letter-spacing:-0.15px;">123.456,00</div><div class="t " style="left:123.04999999999998px;width:80px;text-align:right;top:286.87px;font-size:9.6px;line-height:9.6px;color:#000;letter-spacing:-0.15px;">214</div><div class="t " style="left:202.04999999999998px;width:80px;text-align:right;top:286.87px;font-size:9.6px;line-height:9.6px;color:#000;letter-spacing:-0.15px;">143</div><div class="t " style="left:274.05px;width:80px;text-align:right;top:286.87px;font-size:9.6px;line-height:9.6px;color:#000;letter-spacing:-0.15px;">107</div><div class="t " style="left:362.05px;width:80px;text-align:right;top:286.87px;font-size:9.6px;line-height:9.6px;color:#000;letter-spacing:-0.15px;">107</div><div class="t " style="left:449.05000000000007px;width:80px;text-align:right;top:286.87px;font-size:9.6px;line-height:9.6px;color:#000;letter-spacing:-0.15px;">85.535</div><div class="t " style="left:544.0500000000001px;width:80px;text-align:right;top:286.87px;font-size:9.6px;line-height:9.6px;color:#000;letter-spacing:-0.15px;">1.960</div><div class="t " style="left:623.0500000000001px;width:80px;text-align:right;top:286.87px;font-size:9.6px;line-height:9.6px;color:#000;letter-spacing:-0.15px;">3.136</div><div class="t " style="left:702.0500000000001px;width:80px;text-align:right;top:286.87px;font-size:9.6px;line-height:9.6px;color:#000;letter-spacing:-0.15px;">2.744</div><div class="t " style="left:781.0500000000001px;width:80px;text-align:right;top:286.87px;font-size:9.6px;line-height:9.6px;color:#000;letter-spacing:-0.15px;">285</div><div class="t " style="left:868.0500000000001px;width:80px;text-align:right;top:286.87px;font-size:9.6px;line-height:9.6px;color:#000;letter-spacing:-0.15px;">17.463</div><div class="t " style="left:55.04999999999999px;width:80px;text-align:right;top:301.87px;font-size:9.6px;line-height:9.6px;color:#000080;letter-spacing:-0.15px;">60.987,00</div><div class="t " style="left:123.04999999999998px;width:80px;text-align:right;top:301.87px;font-size:9.6px;line-height:9.6px;color:#000;letter-spacing:-0.15px;">2.459</div><div class="t " style="left:202.04999999999998px;width:80px;text-align:right;top:301.87px;font-size:9.6px;line-height:9.6px;color:#000;letter-spacing:-0.15px;">4.426</div><div class="t " style="left:274.05px;width:80px;text-align:right;top:301.87px;font-size:9.6px;line-height:9.6px;color:#000;letter-spacing:-0.15px;">1.967</div><div class="t " style="left:362.05px;width:80px;text-align:right;top:301.87px;font-size:9.6px;line-height:9.6px;color:#000;letter-spacing:-0.15px;">37.871</div><div class="t " style="left:483px;width:40px;text-align:right;top:301.87px;font-size:9.6px;line-height:9.6px;color:#000;">-</div><div class="t " style="left:544.0500000000001px;width:80px;text-align:right;top:301.87px;font-size:9.6px;line-height:9.6px;color:#000;letter-spacing:-0.15px;">1.475</div><div class="t " style="left:623.0500000000001px;width:80px;text-align:right;top:301.87px;font-size:9.6px;line-height:9.6px;color:#000;letter-spacing:-0.15px;">1.967</div><div class="t " style="left:702.0500000000001px;width:80px;text-align:right;top:301.87px;font-size:9.6px;line-height:9.6px;color:#000;letter-spacing:-0.15px;">2.951</div><div class="t " style="left:781.0500000000001px;width:80px;text-align:right;top:301.87px;font-size:9.6px;line-height:9.6px;color:#000;letter-spacing:-0.15px;">4.426</div><div class="t " style="left:868.0500000000001px;width:80px;text-align:right;top:301.87px;font-size:9.6px;line-height:9.6px;color:#000;letter-spacing:-0.15px;">984</div><div class="t " style="left:55.04999999999999px;width:80px;text-align:right;top:317.87px;font-size:9.6px;line-height:9.6px;color:#000080;letter-spacing:-0.15px;">126.789,00</div><div class="t " style="left:123.04999999999998px;width:80px;text-align:right;top:317.87px;font-size:9.6px;line-height:9.6px;color:#000;letter-spacing:-0.15px;">2.087</div><div class="t " style="left:202.04999999999998px;width:80px;text-align:right;top:317.87px;font-size:9.6px;line-height:9.6px;color:#000;letter-spacing:-0.15px;">522</div><div class="t " style="left:274.05px;width:80px;text-align:right;top:317.87px;font-size:9.6px;line-height:9.6px;color:#000;letter-spacing:-0.15px;">1.044</div><div class="t " style="left:362.05px;width:80px;text-align:right;top:317.87px;font-size:9.6px;line-height:9.6px;color:#000;letter-spacing:-0.15px;">34.437</div><div class="t " style="left:449.05000000000007px;width:80px;text-align:right;top:317.87px;font-size:9.6px;line-height:9.6px;color:#000;letter-spacing:-0.15px;">4.174</div><div class="t " style="left:544.0500000000001px;width:80px;text-align:right;top:317.87px;font-size:9.6px;line-height:9.6px;color:#000;letter-spacing:-0.15px;">29.219</div><div class="t " style="left:623.0500000000001px;width:80px;text-align:right;top:317.87px;font-size:9.6px;line-height:9.6px;color:#000;letter-spacing:-0.15px;">2.087</div><div class="t " style="left:702.0500000000001px;width:80px;text-align:right;top:317.87px;font-size:9.6px;line-height:9.6px;color:#000;letter-spacing:-0.15px;">28.697</div><div class="t " style="left:781.0500000000001px;width:80px;text-align:right;top:317.87px;font-size:9.6px;line-height:9.6px;color:#000;letter-spacing:-0.15px;">17.218</div><div class="t " style="left:868.0500000000001px;width:80px;text-align:right;top:317.87px;font-size:9.6px;line-height:9.6px;color:#000;letter-spacing:-0.15px;">4.174</div><div class="t " style="left:202.04999999999998px;width:80px;text-align:right;top:349.87px;font-size:9.6px;line-height:9.6px;color:#000;letter-spacing:-0.15px;">3.145</div><div class="t " style="left:274.05px;width:80px;text-align:right;top:349.87px;font-size:9.6px;line-height:9.6px;color:#000;letter-spacing:-0.15px;">1.258</div><div class="t " style="left:362.05px;width:80px;text-align:right;top:349.87px;font-size:9.6px;line-height:9.6px;color:#000;letter-spacing:-0.15px;">6.919</div><div class="t " style="left:449.05000000000007px;width:80px;text-align:right;top:349.87px;font-size:9.6px;line-height:9.6px;color:#000;letter-spacing:-0.15px;">88.063</div><div class="t " style="left:544.0500000000001px;width:80px;text-align:right;top:349.87px;font-size:9.6px;line-height:9.6px;color:#000;letter-spacing:-0.15px;">69.193</div><div class="t " style="left:623.0500000000001px;width:80px;text-align:right;top:349.87px;font-size:9.6px;line-height:9.6px;color:#000;letter-spacing:-0.15px;">90.579</div><div class="t " style="left:702.0500000000001px;width:80px;text-align:right;top:349.87px;font-size:9.6px;line-height:9.6px;color:#000;letter-spacing:-0.15px;">3.774</div><div class="t " style="left:781.0500000000001px;width:80px;text-align:right;top:349.87px;font-size:9.6px;line-height:9.6px;color:#000;letter-spacing:-0.15px;">1.573</div><div class="t " style="left:868.0500000000001px;width:80px;text-align:right;top:349.87px;font-size:9.6px;line-height:9.6px;color:#000;letter-spacing:-0.15px;">34.768</div><div class="t " style="left:202.04999999999998px;width:80px;text-align:right;top:365.87px;font-size:9.6px;line-height:9.6px;color:#000;letter-spacing:-0.15px;">200.432</div><div class="t " style="left:274.05px;width:80px;text-align:right;top:365.87px;font-size:9.6px;line-height:9.6px;color:#000;letter-spacing:-0.15px;">91.784</div><div class="t " style="left:362.05px;width:80px;text-align:right;top:365.87px;font-size:9.6px;line-height:9.6px;color:#000;letter-spacing:-0.15px;">503.934</div><div class="t " style="left:449.05000000000007px;width:80px;text-align:right;top:365.87px;font-size:9.6px;line-height:9.6px;color:#000;letter-spacing:-0.15px;">465.126</div><div class="t " style="left:544.0500000000001px;width:80px;text-align:right;top:365.87px;font-size:9.6px;line-height:9.6px;color:#000;letter-spacing:-0.15px;">396.049</div><div class="t " style="left:623.0500000000001px;width:80px;text-align:right;top:365.87px;font-size:9.6px;line-height:9.6px;color:#000;letter-spacing:-0.15px;">309.353</div><div class="t " style="left:702.0500000000001px;width:80px;text-align:right;top:365.87px;font-size:9.6px;line-height:9.6px;color:#000;letter-spacing:-0.15px;">187.459</div><div class="t " style="left:781.0500000000001px;width:80px;text-align:right;top:365.87px;font-size:9.6px;line-height:9.6px;color:#000;letter-spacing:-0.15px;">493.878</div><div class="t " style="left:868.0500000000001px;width:80px;text-align:right;top:365.87px;font-size:9.6px;line-height:9.6px;color:#000;letter-spacing:-0.15px;">262.088</div><div class="t " style="left:274.05px;width:80px;text-align:right;top:381.87px;font-size:9.6px;line-height:9.6px;color:#000;letter-spacing:-0.15px;">1.015</div><div class="t " style="left:362.05px;width:80px;text-align:right;top:381.87px;font-size:9.6px;line-height:9.6px;color:#000;letter-spacing:-0.15px;">2.769</div><div class="t " style="left:449.05000000000007px;width:80px;text-align:right;top:381.87px;font-size:9.6px;line-height:9.6px;color:#000;letter-spacing:-0.15px;">73.844</div><div class="t " style="left:544.0500000000001px;width:80px;text-align:right;top:381.87px;font-size:9.6px;line-height:9.6px;color:#000;letter-spacing:-0.15px;">59.537</div><div class="t " style="left:623.0500000000001px;width:80px;text-align:right;top:381.87px;font-size:9.6px;line-height:9.6px;color:#000;letter-spacing:-0.15px;">46.614</div><div class="t " style="left:702.0500000000001px;width:80px;text-align:right;top:381.87px;font-size:9.6px;line-height:9.6px;color:#000;letter-spacing:-0.15px;">11.077</div><div class="t " style="left:781.0500000000001px;width:80px;text-align:right;top:381.87px;font-size:9.6px;line-height:9.6px;color:#000;letter-spacing:-0.15px;">37</div><div class="t " style="left:868.0500000000001px;width:80px;text-align:right;top:381.87px;font-size:9.6px;line-height:9.6px;color:#000;letter-spacing:-0.15px;">4.615</div><div class="t " style="left:274.05px;width:80px;text-align:right;top:397.87px;font-size:9.6px;line-height:9.6px;color:#000;letter-spacing:-0.15px;">92.800</div><div class="t " style="left:362.05px;width:80px;text-align:right;top:397.87px;font-size:9.6px;line-height:9.6px;color:#000;letter-spacing:-0.15px;">506.703</div><div class="t " style="left:449.05000000000007px;width:80px;text-align:right;top:397.87px;font-size:9.6px;line-height:9.6px;color:#000;letter-spacing:-0.15px;">538.971</div><div class="t " style="left:544.0500000000001px;width:80px;text-align:right;top:397.87px;font-size:9.6px;line-height:9.6px;color:#000;letter-spacing:-0.15px;">455.586</div><div class="t " style="left:623.0500000000001px;width:80px;text-align:right;top:397.87px;font-size:9.6px;line-height:9.6px;color:#000;letter-spacing:-0.15px;">355.967</div><div class="t " style="left:702.0500000000001px;width:80px;text-align:right;top:397.87px;font-size:9.6px;line-height:9.6px;color:#000;letter-spacing:-0.15px;">198.536</div><div class="t " style="left:781.0500000000001px;width:80px;text-align:right;top:397.87px;font-size:9.6px;line-height:9.6px;color:#000;letter-spacing:-0.15px;">493.915</div><div class="t " style="left:868.0500000000001px;width:80px;text-align:right;top:397.87px;font-size:9.6px;line-height:9.6px;color:#000;letter-spacing:-0.15px;">266.703</div><div class="t " style="left:362.05px;width:80px;text-align:right;top:413.87px;font-size:9.6px;line-height:9.6px;color:#000;letter-spacing:-0.15px;">10.311</div><div class="t " style="left:449.05000000000007px;width:80px;text-align:right;top:413.87px;font-size:9.6px;line-height:9.6px;color:#000;letter-spacing:-0.15px;">12.889</div><div class="t " style="left:544.0500000000001px;width:80px;text-align:right;top:413.87px;font-size:9.6px;line-height:9.6px;color:#000;letter-spacing:-0.15px;">15.467</div><div class="t " style="left:623.0500000000001px;width:80px;text-align:right;top:413.87px;font-size:9.6px;line-height:9.6px;color:#000;letter-spacing:-0.15px;">18.044</div><div class="t " style="left:702.0500000000001px;width:80px;text-align:right;top:413.87px;font-size:9.6px;line-height:9.6px;color:#000;letter-spacing:-0.15px;">20.622</div><div class="t " style="left:781.0500000000001px;width:80px;text-align:right;top:413.87px;font-size:9.6px;line-height:9.6px;color:#000;letter-spacing:-0.15px;">2.578</div><div class="t " style="left:868.0500000000001px;width:80px;text-align:right;top:413.87px;font-size:9.6px;line-height:9.6px;color:#000;letter-spacing:-0.15px;">5.156</div><div class="t " style="left:362.05px;width:80px;text-align:right;top:429.87px;font-size:9.6px;line-height:9.6px;color:#000;letter-spacing:-0.15px;">517.014</div><div class="t " style="left:449.05000000000007px;width:80px;text-align:right;top:429.87px;font-size:9.6px;line-height:9.6px;color:#000;letter-spacing:-0.15px;">551.859</div><div class="t " style="left:544.0500000000001px;width:80px;text-align:right;top:429.87px;font-size:9.6px;line-height:9.6px;color:#000;letter-spacing:-0.15px;">471.052</div><div class="t " style="left:623.0500000000001px;width:80px;text-align:right;top:429.87px;font-size:9.6px;line-height:9.6px;color:#000;letter-spacing:-0.15px;">374.012</div><div class="t " style="left:702.0500000000001px;width:80px;text-align:right;top:429.87px;font-size:9.6px;line-height:9.6px;color:#000;letter-spacing:-0.15px;">219.158</div><div class="t " style="left:781.0500000000001px;width:80px;text-align:right;top:429.87px;font-size:9.6px;line-height:9.6px;color:#000;letter-spacing:-0.15px;">496.492</div><div class="t " style="left:868.0500000000001px;width:80px;text-align:right;top:429.87px;font-size:9.6px;line-height:9.6px;color:#000;letter-spacing:-0.15px;">271.859</div><div class="t " style="left:449.05000000000007px;width:80px;text-align:right;top:445.87px;font-size:9.6px;line-height:9.6px;color:#000;letter-spacing:-0.15px;">227.802</div><div class="t " style="left:544.0500000000001px;width:80px;text-align:right;top:445.87px;font-size:9.6px;line-height:9.6px;color:#000;letter-spacing:-0.15px;">96.378</div><div class="t " style="left:623.0500000000001px;width:80px;text-align:right;top:445.87px;font-size:9.6px;line-height:9.6px;color:#000;letter-spacing:-0.15px;">11.682</div><div class="t " style="left:702.0500000000001px;width:80px;text-align:right;top:445.87px;font-size:9.6px;line-height:9.6px;color:#000;letter-spacing:-0.15px;">160.630</div><div class="t " style="left:362.05px;width:80px;text-align:right;top:461.87px;font-size:9.6px;line-height:9.6px;color:#000;letter-spacing:-0.15px;">517.014</div><div class="t " style="left:449.05000000000007px;width:80px;text-align:right;top:461.87px;font-size:9.6px;line-height:9.6px;color:#000;letter-spacing:-0.15px;">779.662</div><div class="t " style="left:544.0500000000001px;width:80px;text-align:right;top:461.87px;font-size:9.6px;line-height:9.6px;color:#000;letter-spacing:-0.15px;">567.430</div><div class="t " style="left:623.0500000000001px;width:80px;text-align:right;top:461.87px;font-size:9.6px;line-height:9.6px;color:#000;letter-spacing:-0.15px;">385.694</div><div class="t " style="left:702.0500000000001px;width:80px;text-align:right;top:461.87px;font-size:9.6px;line-height:9.6px;color:#000;letter-spacing:-0.15px;">379.788</div><div class="t " style="left:868.0500000000001px;width:80px;text-align:right;top:461.87px;font-size:9.6px;line-height:9.6px;color:#000;letter-spacing:-0.15px;">271.859</div><div class="t " style="left:449.05000000000007px;width:80px;text-align:right;top:477.87px;font-size:9.6px;line-height:9.6px;color:#000;letter-spacing:-0.15px;">111.855</div><div class="t " style="left:544.0500000000001px;width:80px;text-align:right;top:477.87px;font-size:9.6px;line-height:9.6px;color:#000;letter-spacing:-0.15px;">175.847</div><div class="t " style="left:623.0500000000001px;width:80px;text-align:right;top:477.87px;font-size:9.6px;line-height:9.6px;color:#000;letter-spacing:-0.15px;">92.086</div><div class="t " style="left:55.5px;width:80px;text-align:right;top:334.24px;font-size:9.4px;line-height:9.4px;color:#000080;">3.123.058,00</div><div class="t " style="left:124.12px;width:80px;text-align:right;top:334.04px;font-size:9.4px;line-height:9.4px;color:#000;font-weight:bold;letter-spacing:0.62px;">311.853</div><div class="t " style="left:203.12px;width:80px;text-align:right;top:334.04px;font-size:9.4px;line-height:9.4px;color:#000;font-weight:bold;letter-spacing:0.62px;">197.287</div><div class="t " style="left:275.12px;width:80px;text-align:right;top:334.04px;font-size:9.4px;line-height:9.4px;color:#000;font-weight:bold;letter-spacing:0.62px;">90.526</div><div class="t " style="left:363.12px;width:80px;text-align:right;top:334.04px;font-size:9.4px;line-height:9.4px;color:#000;font-weight:bold;letter-spacing:0.62px;">497.015</div><div class="t " style="left:450.12px;width:80px;text-align:right;top:334.04px;font-size:9.4px;line-height:9.4px;color:#000;font-weight:bold;letter-spacing:0.62px;">377.063</div><div class="t " style="left:545.12px;width:80px;text-align:right;top:334.04px;font-size:9.4px;line-height:9.4px;color:#000;font-weight:bold;letter-spacing:0.62px;">326.856</div><div class="t " style="left:624.12px;width:80px;text-align:right;top:334.04px;font-size:9.4px;line-height:9.4px;color:#000;font-weight:bold;letter-spacing:0.62px;">218.774</div><div class="t " style="left:703.12px;width:80px;text-align:right;top:334.04px;font-size:9.4px;line-height:9.4px;color:#000;font-weight:bold;letter-spacing:0.62px;">183.685</div><div class="t " style="left:782.12px;width:80px;text-align:right;top:334.04px;font-size:9.4px;line-height:9.4px;color:#000;font-weight:bold;letter-spacing:0.62px;">492.305</div><div class="t " style="left:869.12px;width:80px;text-align:right;top:334.04px;font-size:9.4px;line-height:9.4px;color:#000;font-weight:bold;letter-spacing:0.62px;">227.320</div><div class="t " style="left:956.12px;width:80px;text-align:right;top:334.04px;font-size:9.4px;line-height:9.4px;color:#000;font-weight:bold;letter-spacing:0.62px;">255.555</div><div class="t " style="left:954.35px;width:80px;text-align:right;top:429.87px;font-size:9.6px;line-height:9.6px;color:#000;letter-spacing:-0.15px;">271.859</div><div class="t " style="left:954.35px;width:80px;text-align:right;top:461.87px;font-size:9.6px;line-height:9.6px;color:#000;letter-spacing:-0.15px;">271.859</div><div class="t " style="left:70px;top:492.11px;font-size:10.5px;line-height:10.5px;color:#8b0000;font-weight:bold;letter-spacing:0.27px;">Gemeinkosten der Hauptkostenstellen</div><div class="t " style="left:70px;top:508.11px;font-size:10.5px;line-height:10.5px;color:#008000;font-weight:bold;letter-spacing:0.27px;">Einzelkosten (Zuschlagsbasis)</div><div class="t " style="left:70px;top:524.11px;font-size:10.5px;line-height:10.5px;color:#0000ff;font-weight:bold;letter-spacing:0.27px;">Zuschlagssätze</div><div class="t " style="left:353.1px;width:90px;text-align:right;top:492.11px;font-size:10.5px;line-height:10.5px;color:#8b0000;font-weight:bold;letter-spacing:0.6px;">517.014</div><div class="t " style="left:440.1px;width:90px;text-align:right;top:492.11px;font-size:10.5px;line-height:10.5px;color:#8b0000;font-weight:bold;letter-spacing:0.6px;">891.517</div><div class="t " style="left:535.1px;width:90px;text-align:right;top:492.11px;font-size:10.5px;line-height:10.5px;color:#8b0000;font-weight:bold;letter-spacing:0.6px;">743.277</div><div class="t " style="left:614.1px;width:90px;text-align:right;top:492.11px;font-size:10.5px;line-height:10.5px;color:#8b0000;font-weight:bold;letter-spacing:0.6px;">477.779</div><div class="t " style="left:859.1px;width:90px;text-align:right;top:492.11px;font-size:10.5px;line-height:10.5px;color:#8b0000;font-weight:bold;letter-spacing:0.6px;">271.859</div><div class="t " style="left:948.1px;width:90px;text-align:right;top:492.11px;font-size:10.5px;line-height:10.5px;color:#8b0000;font-weight:bold;letter-spacing:0.6px;">271.859</div><div class="t " style="left:353.1px;width:90px;text-align:right;top:508.11px;font-size:10.5px;line-height:10.5px;color:#008000;font-weight:bold;letter-spacing:0.6px;">456.789</div><div class="t " style="left:440.1px;width:90px;text-align:right;top:508.11px;font-size:10.5px;line-height:10.5px;color:#008000;font-weight:bold;letter-spacing:0.6px;">350.550</div><div class="t " style="left:535.1px;width:90px;text-align:right;top:508.11px;font-size:10.5px;line-height:10.5px;color:#008000;font-weight:bold;letter-spacing:0.6px;">237.653</div><div class="t " style="left:614.1px;width:90px;text-align:right;top:508.11px;font-size:10.5px;line-height:10.5px;color:#008000;font-weight:bold;letter-spacing:0.6px;">399.415</div><div class="t " style="left:859.1px;width:90px;text-align:right;top:508.11px;font-size:10.5px;line-height:10.5px;color:#008080;font-weight:bold;letter-spacing:0.6px;">3.905.106</div><div class="t " style="left:948.6px;width:90px;text-align:right;top:508.11px;font-size:10.5px;line-height:10.5px;color:#008080;font-weight:bold;letter-spacing:0.6px;">3.905.106</div><div class="t " style="left:375.5px;width:90px;text-align:center;top:524.11px;font-size:10.5px;line-height:10.5px;color:#0000ff;font-weight:bold;letter-spacing:1.0px;">113,2%</div><div class="t " style="left:463.0px;width:90px;text-align:center;top:524.11px;font-size:10.5px;line-height:10.5px;color:#0000ff;font-weight:bold;letter-spacing:1.0px;">254,3%</div><div class="t " style="left:554.0px;width:90px;text-align:center;top:524.11px;font-size:10.5px;line-height:10.5px;color:#0000ff;font-weight:bold;letter-spacing:1.0px;">312,8%</div><div class="t " style="left:641.0px;width:90px;text-align:center;top:524.11px;font-size:10.5px;line-height:10.5px;color:#0000ff;font-weight:bold;letter-spacing:1.0px;">119,6%</div><div class="t " style="left:882.0px;width:90px;text-align:center;top:524.11px;font-size:10.5px;line-height:10.5px;color:#000080;font-weight:bold;letter-spacing:1.0px;">7,0%</div><div class="t " style="left:969.0px;width:90px;text-align:center;top:524.11px;font-size:10.5px;line-height:10.5px;color:#000080;font-weight:bold;letter-spacing:1.0px;">7,0%</div><div class="t " style="left:379px;top:555.91px;font-size:10.5px;line-height:10.5px;color:#800080;font-weight:bold;letter-spacing:0.38px;">Berechnung der Herstellkosten</div><div class="t " style="left:378.2px;top:571.29px;font-size:11px;line-height:11px;color:#800080;letter-spacing:0.7px;">MEK</div><div class="t " style="left:556px;top:571.29px;font-size:11px;line-height:11px;color:#800080;letter-spacing:0.45px;">456.789</div><div class="t " style="left:378.2px;top:586.29px;font-size:11px;line-height:11px;color:#800080;letter-spacing:0.7px;">MGK</div><div class="t " style="left:556px;top:586.29px;font-size:11px;line-height:11px;color:#800080;letter-spacing:0.45px;">517.014</div><div class="t " style="left:378.2px;top:601.29px;font-size:11px;line-height:11px;color:#800080;letter-spacing:0.7px;">FEK[A]</div><div class="t " style="left:556px;top:601.29px;font-size:11px;line-height:11px;color:#800080;letter-spacing:0.45px;">350.550</div><div class="t " style="left:378.2px;top:616.29px;font-size:11px;line-height:11px;color:#800080;letter-spacing:0.7px;">FGK[A]</div><div class="t " style="left:556px;top:616.29px;font-size:11px;line-height:11px;color:#800080;letter-spacing:0.45px;">891.517</div><div class="t " style="left:378.2px;top:631.29px;font-size:11px;line-height:11px;color:#800080;letter-spacing:0.7px;">FEK[B]</div><div class="t " style="left:556px;top:631.29px;font-size:11px;line-height:11px;color:#800080;letter-spacing:0.45px;">237.653</div><div class="t " style="left:378.2px;top:646.29px;font-size:11px;line-height:11px;color:#800080;letter-spacing:0.7px;">FGK[B]</div><div class="t " style="left:556px;top:646.29px;font-size:11px;line-height:11px;color:#800080;letter-spacing:0.45px;">743.277</div><div class="t " style="left:378.2px;top:661.29px;font-size:11px;line-height:11px;color:#800080;letter-spacing:0.7px;">FEK[C]</div><div class="t " style="left:556px;top:661.29px;font-size:11px;line-height:11px;color:#800080;letter-spacing:0.45px;">399.415</div><div class="t " style="left:378.2px;top:677.29px;font-size:11px;line-height:11px;color:#800080;letter-spacing:0.7px;">FGK[C]</div><div class="t " style="left:556px;top:677.29px;font-size:11px;line-height:11px;color:#800080;letter-spacing:0.45px;">477.779</div><div class="t " style="left:379px;top:691.81px;font-size:10.5px;line-height:10.5px;color:#000;font-weight:bold;letter-spacing:0.22px;">Herstellkosten der Periode</div><div class="t " style="left:565px;top:691.81px;font-size:10.5px;line-height:10.5px;color:#800080;font-weight:bold;letter-spacing:0.6px;">4.073.995</div><div style="left:67px;top:156px;width:992px;height:3px;background:#000;"></div><div style="left:67px;top:188px;width:992px;height:3px;background:#000;"></div><div style="left:464px;top:172px;width:421px;height:3px;background:#000;"></div><div style="left:378px;top:172px;width:85px;height:3px;background:#3a3d3a;"></div><div style="left:67px;top:156px;width:2px;height:34px;background:#000;"></div><div style="left:157px;top:156px;width:2px;height:34px;background:#000;"></div><div style="left:376px;top:156px;width:2px;height:34px;background:#000;"></div><div style="left:464px;top:156px;width:2px;height:34px;background:#000;"></div><div style="left:883px;top:156px;width:2px;height:34px;background:#000;"></div><div style="left:970px;top:156px;width:2px;height:34px;background:#000;"></div><div style="left:376px;top:156px;width:2px;height:34px;background:#000;"></div><div style="left:67px;top:188px;width:2px;height:141px;background:#000;"></div><div style="left:157px;top:188px;width:2px;height:141px;background:#000;"></div><div style="left:376px;top:188px;width:2px;height:141px;background:#000;"></div><div style="left:464px;top:188px;width:2px;height:141px;background:#000;"></div><div style="left:725px;top:188px;width:2px;height:141px;background:#000;"></div><div style="left:883px;top:188px;width:2px;height:141px;background:#000;"></div><div style="left:970px;top:188px;width:2px;height:141px;background:#000;"></div><div style="left:67px;top:327px;width:992px;height:3px;background:#000;"></div><div style="left:67px;top:343px;width:992px;height:3px;background:#000;"></div><div style="left:67px;top:327px;width:2px;height:18px;background:#000;"></div><div style="left:157px;top:327px;width:2px;height:18px;background:#000;"></div><div style="left:225px;top:359px;width:834px;height:3px;background:#000;"></div><div style="left:225px;top:375px;width:834px;height:3px;background:#000;"></div><div style="left:225px;top:343px;width:2px;height:34px;background:#000;"></div><div style="left:304px;top:343px;width:2px;height:34px;background:#000;"></div><div style="left:376px;top:343px;width:2px;height:34px;background:#000;"></div><div style="left:464px;top:343px;width:2px;height:34px;background:#000;"></div><div style="left:551px;top:343px;width:2px;height:34px;background:#000;"></div><div style="left:646px;top:343px;width:2px;height:34px;background:#000;"></div><div style="left:725px;top:343px;width:2px;height:34px;background:#000;"></div><div style="left:804px;top:343px;width:2px;height:34px;background:#000;"></div><div style="left:883px;top:343px;width:2px;height:34px;background:#000;"></div><div style="left:970px;top:343px;width:2px;height:34px;background:#000;"></div><div style="left:304px;top:391px;width:755px;height:3px;background:#000;"></div><div style="left:304px;top:407px;width:755px;height:3px;background:#000;"></div><div style="left:304px;top:375px;width:2px;height:34px;background:#000;"></div><div style="left:376px;top:375px;width:2px;height:34px;background:#000;"></div><div style="left:464px;top:375px;width:2px;height:34px;background:#000;"></div><div style="left:551px;top:375px;width:2px;height:34px;background:#000;"></div><div style="left:646px;top:375px;width:2px;height:34px;background:#000;"></div><div style="left:725px;top:375px;width:2px;height:34px;background:#000;"></div><div style="left:804px;top:375px;width:2px;height:34px;background:#000;"></div><div style="left:883px;top:375px;width:2px;height:34px;background:#000;"></div><div style="left:970px;top:375px;width:2px;height:34px;background:#000;"></div><div style="left:376px;top:423px;width:683px;height:3px;background:#000;"></div><div style="left:376px;top:439px;width:683px;height:3px;background:#000;"></div><div style="left:376px;top:407px;width:2px;height:34px;background:#000;"></div><div style="left:464px;top:407px;width:2px;height:34px;background:#000;"></div><div style="left:551px;top:407px;width:2px;height:34px;background:#000;"></div><div style="left:646px;top:407px;width:2px;height:34px;background:#000;"></div><div style="left:725px;top:407px;width:2px;height:34px;background:#000;"></div><div style="left:804px;top:407px;width:2px;height:34px;background:#000;"></div><div style="left:883px;top:407px;width:2px;height:34px;background:#000;"></div><div style="left:970px;top:407px;width:2px;height:34px;background:#000;"></div><div style="left:464px;top:439px;width:2px;height:18px;background:#000;"></div><div style="left:551px;top:439px;width:2px;height:18px;background:#000;"></div><div style="left:646px;top:439px;width:2px;height:18px;background:#000;"></div><div style="left:725px;top:439px;width:2px;height:18px;background:#000;"></div><div style="left:804px;top:439px;width:2px;height:18px;background:#000;"></div><div style="left:376px;top:455px;width:430px;height:3px;background:#000;"></div><div style="left:883px;top:455px;width:176px;height:3px;background:#000;"></div><div style="left:376px;top:455px;width:2px;height:18px;background:#000;"></div><div style="left:464px;top:455px;width:2px;height:18px;background:#000;"></div><div style="left:551px;top:455px;width:2px;height:18px;background:#000;"></div><div style="left:646px;top:455px;width:2px;height:18px;background:#000;"></div><div style="left:725px;top:455px;width:2px;height:18px;background:#000;"></div><div style="left:804px;top:455px;width:2px;height:18px;background:#000;"></div><div style="left:883px;top:455px;width:2px;height:18px;background:#000;"></div><div style="left:970px;top:455px;width:2px;height:18px;background:#000;"></div><div style="left:376px;top:471px;width:430px;height:3px;background:#000;"></div><div style="left:883px;top:471px;width:176px;height:3px;background:#000;"></div><div style="left:464px;top:471px;width:2px;height:18px;background:#000;"></div><div style="left:551px;top:471px;width:2px;height:18px;background:#000;"></div><div style="left:646px;top:471px;width:2px;height:18px;background:#000;"></div><div style="left:725px;top:471px;width:2px;height:18px;background:#000;"></div><div style="left:376px;top:487px;width:351px;height:3px;background:#000;"></div><div style="left:883px;top:487px;width:176px;height:3px;background:#000;"></div><div style="left:376px;top:503px;width:351px;height:3px;background:#000;"></div><div style="left:883px;top:503px;width:176px;height:3px;background:#000;"></div><div style="left:376px;top:519px;width:351px;height:3px;background:#000;"></div><div style="left:883px;top:519px;width:176px;height:3px;background:#000;"></div><div style="left:376px;top:535px;width:351px;height:3px;background:#000;"></div><div style="left:883px;top:535px;width:176px;height:3px;background:#000;"></div><div style="left:376px;top:487px;width:2px;height:50px;background:#000;"></div><div style="left:464px;top:487px;width:2px;height:50px;background:#000;"></div><div style="left:551px;top:487px;width:2px;height:50px;background:#000;"></div><div style="left:646px;top:487px;width:2px;height:50px;background:#000;"></div><div style="left:725px;top:487px;width:2px;height:50px;background:#000;"></div><div style="left:883px;top:487px;width:2px;height:50px;background:#000;"></div><div style="left:970px;top:487px;width:2px;height:50px;background:#000;"></div><div style="left:376px;top:551px;width:272px;height:3px;background:#000;"></div><div style="left:376px;top:567px;width:272px;height:3px;background:#000;"></div><div style="left:376px;top:551px;width:2px;height:18px;background:#000;"></div><div style="left:646px;top:551px;width:2px;height:18px;background:#000;"></div><div style="left:375px;top:158px;width:91px;height:1px;background:#fff;"></div><div style="left:375px;top:159px;width:1px;height:16px;background:#000080;"></div><div style="left:376px;top:158px;width:2px;height:17px;background:#fff;"></div><div style="left:463px;top:159px;width:1px;height:13px;background:#404040;"></div><div style="left:464px;top:158px;width:2px;height:14px;background:#fff;"></div><div style="left:463px;top:172px;width:1px;height:3px;background:#fff;"></div><div style="left:464px;top:172px;width:2px;height:3px;background:#000;"></div><div style="left:466px;top:172px;width:2px;height:3px;background:#fff;"></div><div style="left:463px;top:175px;width:1px;height:2px;background:#404040;"></div><div style="left:464px;top:175px;width:2px;height:2px;background:#fff;"></div><div style="left:466px;top:175px;width:2px;height:2px;background:#3a3d3a;"></div><div style="left:376px;top:568px;width:1px;height:121px;background:#000;"></div><div style="left:646px;top:568px;width:1px;height:121px;background:#000;"></div><div style="left:376px;top:688px;width:272px;height:3px;background:#000;"></div><div style="left:376px;top:688px;width:2px;height:17px;background:#000;"></div><div style="left:646px;top:688px;width:2px;height:17px;background:#000;"></div></div><div style="left:1px;top:42px;width:1px;height:699px;background:#f0f0f0;"></div><div style="left:2px;top:42px;width:1px;height:699px;background:#b4b4b4;"></div><div style="left:3px;top:42px;width:1px;height:695px;background:#808080;"></div><div style="left:5px;top:140px;width:1px;height:558px;background:#fff;"></div><div style="left:33px;top:140px;width:1px;height:558px;background:#f4f4f4;"></div><div style="left:1002px;top:140px;width:16px;height:558px;background:#ececec;"></div><div style="left:1002px;top:140px;width:16px;height:4px;background:#000;"></div><div style="left:1002px;top:140px;width:1px;height:19px;background:#000;"></div><div style="left:1003px;top:144px;width:15px;height:15px;background:#000;"></div><div style="left:1003px;top:144px;width:14px;height:14px;background:#fff;"></div><div style="left:1004px;top:145px;width:13px;height:13px;background:#a0a0a0;"></div><div style="left:1004px;top:145px;width:12px;height:12px;background:#dcdcdc;"></div><svg style="position:absolute;left:1006px;top:149px" width="8" height="5"><path d="M0 4.5h7.5l-3.75-4z" fill="#000"/></svg><div style="left:1002px;top:270px;width:16px;height:144px;background:#000;"></div><div style="left:1002px;top:270px;width:15px;height:143px;background:#fff;"></div><div style="left:1003px;top:271px;width:14px;height:142px;background:#a0a0a0;"></div><div style="left:1003px;top:271px;width:13px;height:141px;background:#dcdcdc;"></div><div style="left:1003px;top:682px;width:15px;height:16px;background:#000;"></div><div style="left:1003px;top:682px;width:14px;height:15px;background:#fff;"></div><div style="left:1004px;top:683px;width:13px;height:14px;background:#a0a0a0;"></div><div style="left:1004px;top:683px;width:12px;height:13px;background:#dcdcdc;"></div><svg style="position:absolute;left:1006px;top:688px" width="8" height="5"><path d="M0 0.5h7.5l-3.75 4z" fill="#000"/></svg><div style="left:1018px;top:140px;width:2px;height:598px;background:#fff;"></div><div style="left:34px;top:698px;width:968px;height:16px;background:#dcdcdc;"></div><div style="left:34px;top:698px;width:1px;height:16px;background:#000;"></div><div style="left:34px;top:713px;width:265px;height:1px;background:#000;"></div><div style="left:35px;top:698px;width:16px;height:15px;background:#dcdcdc;"></div><div style="left:35px;top:698px;width:15px;height:1px;background:#f4f4f4;"></div><div style="left:35px;top:698px;width:1px;height:15px;background:#f4f4f4;"></div><div style="left:50px;top:698px;width:1px;height:15px;background:#000;"></div><div style="left:51px;top:698px;width:16px;height:15px;background:#dcdcdc;"></div><div style="left:51px;top:698px;width:15px;height:1px;background:#f4f4f4;"></div><div style="left:51px;top:698px;width:1px;height:15px;background:#f4f4f4;"></div><div style="left:66px;top:698px;width:1px;height:15px;background:#000;"></div><div style="left:67px;top:698px;width:16px;height:15px;background:#dcdcdc;"></div><div style="left:67px;top:698px;width:15px;height:1px;background:#f4f4f4;"></div><div style="left:67px;top:698px;width:1px;height:15px;background:#f4f4f4;"></div><div style="left:82px;top:698px;width:1px;height:15px;background:#000;"></div><div style="left:83px;top:698px;width:16px;height:15px;background:#dcdcdc;"></div><div style="left:83px;top:698px;width:15px;height:1px;background:#f4f4f4;"></div><div style="left:83px;top:698px;width:1px;height:15px;background:#f4f4f4;"></div><div style="left:98px;top:698px;width:1px;height:15px;background:#000;"></div><svg style="position:absolute;left:35px;top:698px" width="64" height="15"><rect x="4" y="4" width="2" height="7" fill="#a0a0a0"/><path d="M6.5 7.5 L11 3.5 L11 11.5 Z" fill="#a0a0a0"/><path d="M22.5 7.5 L27 3.5 L27 11.5 Z" fill="#a0a0a0"/><path d="M37 3.5 L41.5 7.5 L37 11.5 Z" fill="#000"/><path d="M52 3.5 L56.5 7.5 L52 11.5 Z" fill="#000"/><rect x="57" y="4" width="2" height="7" fill="#000"/></svg><svg style="position:absolute;left:98px;top:698px" width="202" height="16"><path d="M1 0.5 H55 L60 14.5 H8 Z" fill="#dcdcdc"/><path d="M1 0 V15" stroke="#000" stroke-width="1"/><path d="M1 0.5 H55 M3 0.5 L8.5 14.5 H59.5 L55 0.5" stroke="#000" stroke-width="1" fill="none"/><path d="M55 0.5 H95 L90 14.5 H60 Z" fill="#fff"/><path d="M60 14.5 H90 L95 0.5" stroke="#000" stroke-width="1" fill="none"/><path d="M95 0.5 H145 L140 14.5 H90 Z" fill="#dcdcdc"/><path d="M95 0.5 H146 M95 0.5 L90.5 14.5 H140 L145 0.5" stroke="#000" stroke-width="1" fill="none"/><path d="M145 0.5 H200 V14.5 H140 Z" fill="#dcdcdc"/><path d="M145 0.5 H200.5 V14.5 H140 L145 0.5" stroke="#000" stroke-width="1" fill="none"/></svg><div class="t " style="left:108.5px;top:699.27px;font-size:12.2px;line-height:12.2px;color:#000;">Aufgabe</div><div class="t " style="left:163px;top:699.27px;font-size:12.2px;line-height:12.2px;color:#000;">BAB</div><div class="t " style="left:194.5px;top:699.27px;font-size:12.2px;line-height:12.2px;color:#000;">Zeitblatt</div><div class="t " style="left:246.5px;top:699.27px;font-size:12.2px;line-height:12.2px;color:#000;">Stückkalk</div><div style="left:299px;top:698px;width:5px;height:15px;background:#dcdcdc;"></div><div style="left:299px;top:698px;width:1px;height:15px;background:#fff;"></div><div style="left:303px;top:698px;width:1px;height:16px;background:#a0a0a0;"></div><div style="left:304px;top:698px;width:1px;height:15px;background:#000;"></div><div style="left:304px;top:713px;width:17px;height:1px;background:#000;"></div><div style="left:305px;top:698px;width:16px;height:15px;background:#000;"></div><div style="left:305px;top:698px;width:15px;height:14px;background:#fff;"></div><div style="left:306px;top:699px;width:14px;height:13px;background:#a0a0a0;"></div><div style="left:306px;top:699px;width:13px;height:12px;background:#dcdcdc;"></div><svg style="position:absolute;left:309px;top:701px" width="6" height="9"><path d="M5.5 0.5 L0.5 4.5 L5.5 8.5 Z" fill="#a0a0a0"/></svg><div style="left:321px;top:698px;width:662px;height:15px;background:#ececec;"></div><div style="left:321px;top:698px;width:303px;height:15px;background:#000;"></div><div style="left:321px;top:698px;width:302px;height:14px;background:#fff;"></div><div style="left:322px;top:699px;width:301px;height:13px;background:#a0a0a0;"></div><div style="left:322px;top:699px;width:300px;height:12px;background:#dcdcdc;"></div><div style="left:983px;top:698px;width:15px;height:15px;background:#000;"></div><div style="left:983px;top:698px;width:14px;height:14px;background:#fff;"></div><div style="left:984px;top:699px;width:13px;height:13px;background:#a0a0a0;"></div><div style="left:984px;top:699px;width:12px;height:12px;background:#dcdcdc;"></div><svg style="position:absolute;left:988px;top:701px" width="6" height="9"><path d="M0.5 0.5 L5 4.5 L0.5 8.5 Z" fill="#000"/></svg><div style="left:998px;top:698px;width:4px;height:16px;background:#000;"></div><div style="left:1002px;top:698px;width:16px;height:16px;background:#dcdcdc;"></div><div style="left:4px;top:714px;width:1016px;height:1px;background:#fff;"></div><div style="left:9px;top:718px;width:207px;height:16px;background:#dcdcdc;"></div><div style="left:9px;top:718px;width:207px;height:1px;background:#a0a0a0;"></div><div style="left:9px;top:718px;width:1px;height:16px;background:#a0a0a0;"></div><div style="left:9px;top:733px;width:207px;height:1px;background:#fff;"></div><div style="left:215px;top:718px;width:1px;height:16px;background:#fff;"></div><div class="t " style="left:10px;top:721.17px;font-size:12.2px;line-height:12.2px;color:#000;">Tabelle 2 / 15</div><div style="left:220px;top:718px;width:245px;height:16px;background:#dcdcdc;"></div><div style="left:220px;top:718px;width:245px;height:1px;background:#a0a0a0;"></div><div style="left:220px;top:718px;width:1px;height:16px;background:#a0a0a0;"></div><div style="left:220px;top:733px;width:245px;height:1px;background:#fff;"></div><div style="left:464px;top:718px;width:1px;height:16px;background:#fff;"></div><div class="t " style="left:221px;top:721.17px;font-size:12.2px;line-height:12.2px;color:#000;">TAB_BAB</div><div style="left:468px;top:718px;width:49px;height:16px;background:#dcdcdc;"></div><div style="left:468px;top:718px;width:49px;height:1px;background:#a0a0a0;"></div><div style="left:468px;top:718px;width:1px;height:16px;background:#a0a0a0;"></div><div style="left:468px;top:733px;width:49px;height:1px;background:#fff;"></div><div style="left:516px;top:718px;width:1px;height:16px;background:#fff;"></div><div class="t " style="left:392.5px;width:200px;text-align:center;top:721.17px;font-size:12.2px;line-height:12.2px;color:#000;">90%</div><div style="left:520px;top:718px;width:45px;height:16px;background:#dcdcdc;"></div><div style="left:520px;top:718px;width:45px;height:1px;background:#a0a0a0;"></div><div style="left:520px;top:718px;width:1px;height:16px;background:#a0a0a0;"></div><div style="left:520px;top:733px;width:45px;height:1px;background:#fff;"></div><div style="left:564px;top:718px;width:1px;height:16px;background:#fff;"></div><div style="left:569px;top:718px;width:33px;height:16px;background:#dcdcdc;"></div><div style="left:569px;top:718px;width:33px;height:1px;background:#a0a0a0;"></div><div style="left:569px;top:718px;width:1px;height:16px;background:#a0a0a0;"></div><div style="left:569px;top:733px;width:33px;height:1px;background:#fff;"></div><div style="left:601px;top:718px;width:1px;height:16px;background:#fff;"></div><div class="t " style="left:485.5px;width:200px;text-align:center;top:721.17px;font-size:12.2px;line-height:12.2px;color:#000;">STD</div><div style="left:607px;top:718px;width:17px;height:16px;background:#dcdcdc;"></div><div style="left:607px;top:718px;width:17px;height:1px;background:#a0a0a0;"></div><div style="left:607px;top:718px;width:1px;height:16px;background:#a0a0a0;"></div><div style="left:607px;top:733px;width:17px;height:1px;background:#fff;"></div><div style="left:623px;top:718px;width:1px;height:16px;background:#fff;"></div><div style="left:627px;top:718px;width:388px;height:16px;background:#dcdcdc;"></div><div style="left:627px;top:718px;width:388px;height:1px;background:#a0a0a0;"></div><div style="left:627px;top:718px;width:1px;height:16px;background:#a0a0a0;"></div><div style="left:627px;top:733px;width:388px;height:1px;background:#fff;"></div><div style="left:1014px;top:718px;width:1px;height:16px;background:#fff;"></div><div class="t " style="left:721.0px;width:200px;text-align:center;top:721.17px;font-size:12.2px;line-height:12.2px;color:#000;">Summe=0</div><div style="left:4px;top:735px;width:1016px;height:1px;background:#808080;"></div><div style="left:4px;top:736px;width:1016px;height:1px;background:#fff;"></div><div style="left:2px;top:737px;width:18px;height:4px;background:#a8aca8;"></div><div style="left:20px;top:737px;width:1px;height:4px;background:#fff;"></div><div style="left:1003px;top:737px;width:19px;height:4px;background:#a8aca8;"></div><div style="left:1002px;top:737px;width:1px;height:4px;background:#fff;"></div><svg style="position:absolute;left:320px;top:47px" width="17" height="17" shape-rendering="crispEdges"><rect x="0" y="1" width="8" height="1" fill="#a0a0a0"/><rect x="0" y="1" width="1" height="15" fill="#a0a0a0"/><rect x="1" y="2" width="11" height="13" fill="#fff"/><rect x="2" y="3" width="9" height="11" fill="#d0d0d0"/><rect x="3" y="4" width="2" height="1" fill="#999"/><rect x="6" y="4" width="4" height="1" fill="#999"/><rect x="3" y="6" width="2" height="1" fill="#999"/><rect x="6" y="6" width="4" height="1" fill="#fff"/><rect x="3" y="8" width="2" height="1" fill="#999"/><rect x="6" y="8" width="4" height="1" fill="#fff"/><rect x="3" y="10" width="2" height="1" fill="#999"/><rect x="3" y="12" width="2" height="1" fill="#999"/><path d="M6 13 L10 9 L10 13 Z" fill="#1818e8"/><rect x="9" y="9" width="2" height="4" fill="#b0208c"/><rect x="12" y="5" width="1" height="11" fill="#000"/><rect x="0" y="15" width="13" height="1" fill="#000"/><path d="M8 0 H16 L12 4 Z" fill="#000"/><path d="M10 1 H14 L12 3 Z" fill="#10e020"/></svg><svg style="position:absolute;left:343px;top:48px" width="16" height="14"><path d="M0 3 H5 L6 4 H10 V6 H4 L0 12 Z" fill="#000"/><path d="M1 4 H5 V5 H9 V6 H4 L1 11 Z" fill="#ffff40"/><path d="M0 13 L4 6 H15 L11 13 Z" fill="#000"/><path d="M2 12 L5 7 H13 L10 12 Z" fill="#808000"/><path d="M8 2 Q11 -1 13 2" stroke="#000" fill="none"/><path d="M12 1 H15 L13.5 4 Z" fill="#000"/></svg><svg style="position:absolute;left:367px;top:49px" width="15" height="14" shape-rendering="crispEdges"><rect x="0" y="0" width="13" height="12" fill="#a0a0a0"/><rect x="1" y="12" width="13" height="1" fill="#fff"/><rect x="13" y="1" width="1" height="12" fill="#fff"/><rect x="3" y="1" width="1" height="1" fill="#fff"/><rect x="5" y="1" width="1" height="1" fill="#fff"/><rect x="7" y="1" width="1" height="1" fill="#fff"/><rect x="4" y="2" width="1" height="1" fill="#fff"/><rect x="6" y="2" width="1" height="1" fill="#fff"/><rect x="8" y="2" width="1" height="1" fill="#fff"/><rect x="3" y="3" width="1" height="1" fill="#fff"/><rect x="5" y="3" width="1" height="1" fill="#fff"/><rect x="7" y="3" width="1" height="1" fill="#fff"/><rect x="4" y="4" width="1" height="1" fill="#fff"/><rect x="6" y="4" width="1" height="1" fill="#fff"/><rect x="8" y="4" width="1" height="1" fill="#fff"/></svg><svg style="position:absolute;left:396px;top:49px" width="17" height="14"><rect x="0" y="0" width="11" height="1" fill="#808080"/><rect x="0" y="0" width="1" height="12" fill="#808080"/><rect x="1" y="1" width="10" height="11" fill="#fff"/><rect x="11" y="1" width="1" height="12" fill="#000"/><rect x="0" y="12" width="12" height="1" fill="#000"/><rect x="2" y="2" width="7" height="1" fill="#666"/><rect x="2" y="4" width="2" height="1" fill="#666"/><rect x="2" y="6" width="2" height="1" fill="#666"/><rect x="2" y="8" width="5" height="1" fill="#666"/><rect x="2" y="10" width="5" height="1" fill="#666"/><rect x="5" y="3" width="3" height="3" fill="#0000c0"/><rect x="6" y="4" width="1" height="1" fill="#000"/><path d="M7 12 L9 9 L15 3 L16 4 L10 10 Z" fill="#0000e0" stroke="#000" stroke-width="0.5"/><rect x="7" y="10" width="2" height="2" fill="#e0e000"/></svg><svg style="position:absolute;left:430px;top:47px" width="14" height="16" shape-rendering="crispEdges"><rect x="0" y="0" width="11" height="1" fill="#808080"/><rect x="0" y="0" width="1" height="15" fill="#808080"/><rect x="1" y="1" width="11" height="14" fill="#fff"/><rect x="12" y="3" width="1" height="13" fill="#000"/><rect x="0" y="15" width="13" height="1" fill="#000"/><path d="M10 0 L13 3 H10 Z" fill="#e00000"/><rect x="2" y="2" width="4" height="1" fill="#0000f0"/><rect x="7" y="2" width="1" height="1" fill="#0000f0"/><rect x="2" y="4" width="2" height="1" fill="#0000f0"/><rect x="5" y="4" width="3" height="1" fill="#0000f0"/><rect x="2" y="6" width="3" height="1" fill="#0000f0"/><rect x="6" y="6" width="4" height="1" fill="#0000f0"/><rect x="2" y="8" width="5" height="1" fill="#0000f0"/><rect x="8" y="8" width="2" height="1" fill="#0000f0"/><rect x="1" y="10" width="11" height="5" fill="#f00000"/><rect x="2" y="11" width="2" height="3" fill="#fff"/><rect x="5" y="11" width="2" height="3" fill="#fff"/><rect x="8" y="11" width="2" height="3" fill="#fff"/></svg><svg style="position:absolute;left:450px;top:48px" width="17" height="14"><path d="M4.5 0.5 H13.5 L12.5 5.5 H3.5 Z" fill="#fff" stroke="#000"/><rect x="6" y="2" width="5" height="1" fill="#0000f0"/><rect x="5" y="4" width="5" height="1" fill="#0000f0"/><path d="M0.5 7.5 Q0.5 5.5 3.5 5.5 H14.5 Q16.5 5.5 16.5 8 V11.5 Q16.5 13.5 14 13.5 H3 Q0.5 13.5 0.5 11 Z" fill="#d8d8d8" stroke="#000"/><rect x="1" y="8" width="15" height="1" fill="#000"/><rect x="1" y="11" width="15" height="1" fill="#000"/><rect x="9" y="9" width="3" height="1" fill="#00e000"/></svg><svg style="position:absolute;left:483px;top:48px" width="11" height="16"><path d="M2 0 L6 9 M9 0 L5 9" stroke="#000080" stroke-width="1.3" fill="none"/><ellipse cx="2.5" cy="12" rx="2" ry="3" stroke="#000080" stroke-width="1.2" fill="none"/><ellipse cx="8.5" cy="12" rx="2" ry="3" stroke="#000080" stroke-width="1.2" fill="none"/></svg><svg style="position:absolute;left:504px;top:48px" width="17" height="14" shape-rendering="crispEdges"><rect x="1" y="0" width="7" height="1" fill="#000080"/><rect x="0" y="0" width="2" height="10" fill="#000080"/><rect x="0" y="9" width="8" height="2" fill="#000080"/><rect x="2" y="1" width="6" height="8" fill="#fff"/><rect x="3" y="3" width="3" height="1" fill="#000"/><rect x="3" y="5" width="4" height="1" fill="#000"/><rect x="3" y="7" width="4" height="1" fill="#000"/><rect x="6" y="3" width="7" height="1" fill="#000080"/><rect x="6" y="3" width="2" height="11" fill="#000080"/><rect x="6" y="12" width="10" height="2" fill="#000080"/><rect x="14" y="5" width="2" height="9" fill="#000080"/><rect x="8" y="4" width="6" height="8" fill="#fff"/><rect x="13" y="5" width="1" height="7" fill="#fff"/><rect x="9" y="6" width="3" height="1" fill="#000"/><rect x="9" y="8" width="5" height="1" fill="#000"/><rect x="9" y="10" width="5" height="1" fill="#000"/></svg><svg style="position:absolute;left:527px;top:47px" width="18" height="15" shape-rendering="crispEdges"><rect x="1" y="3" width="9" height="10" fill="#000"/><rect x="2" y="4" width="7" height="8" fill="#a09850"/><rect x="2" y="5" width="1" height="1" fill="#e0e0a0"/><rect x="2" y="7" width="1" height="1" fill="#e0e0a0"/><rect x="2" y="9" width="1" height="1" fill="#e0e0a0"/><rect x="2" y="11" width="1" height="1" fill="#e0e0a0"/><rect x="3" y="6" width="1" height="1" fill="#e0e0a0"/><rect x="3" y="8" width="1" height="1" fill="#e0e0a0"/><rect x="3" y="10" width="1" height="1" fill="#e0e0a0"/><rect x="4" y="5" width="1" height="1" fill="#e0e0a0"/><rect x="4" y="7" width="1" height="1" fill="#e0e0a0"/><rect x="4" y="9" width="1" height="1" fill="#e0e0a0"/><rect x="4" y="11" width="1" height="1" fill="#e0e0a0"/><rect x="5" y="6" width="1" height="1" fill="#e0e0a0"/><rect x="5" y="8" width="1" height="1" fill="#e0e0a0"/><rect x="5" y="10" width="1" height="1" fill="#e0e0a0"/><rect x="6" y="5" width="1" height="1" fill="#e0e0a0"/><rect x="6" y="7" width="1" height="1" fill="#e0e0a0"/><rect x="6" y="9" width="1" height="1" fill="#e0e0a0"/><rect x="6" y="11" width="1" height="1" fill="#e0e0a0"/><rect x="7" y="6" width="1" height="1" fill="#e0e0a0"/><rect x="7" y="8" width="1" height="1" fill="#e0e0a0"/><rect x="7" y="10" width="1" height="1" fill="#e0e0a0"/><rect x="8" y="5" width="1" height="1" fill="#e0e0a0"/><rect x="8" y="7" width="1" height="1" fill="#e0e0a0"/><rect x="8" y="9" width="1" height="1" fill="#e0e0a0"/><rect x="8" y="11" width="1" height="1" fill="#e0e0a0"/><path d="M4 3 L6 1 L8 3 Z" fill="#ffff00" stroke="#000" stroke-width="0.5"/><rect x="3" y="3" width="8" height="1" fill="#fff"/><rect x="8" y="7" width="8" height="8" fill="#000080"/><rect x="9" y="8" width="6" height="6" fill="#fff"/><rect x="10" y="10" width="3" height="1" fill="#000"/><rect x="10" y="12" width="4" height="1" fill="#000"/><path d="M9 0 H17 L13 4 Z" fill="#000"/><path d="M11 1 H15 L13 3 Z" fill="#10e020"/></svg><svg style="position:absolute;left:558px;top:47px" width="17" height="13" shape-rendering="crispEdges"><path d="M10 0 H16 L13 3 Z" fill="#a0a0a0"/><rect x="1" y="4" width="11" height="2" fill="#a0a0a0"/><rect x="11" y="5" width="2" height="5" fill="#a0a0a0"/><rect x="4" y="9" width="8" height="2" fill="#a0a0a0"/><path d="M0 10 L4 6.5 V13.5 Z" fill="#a0a0a0"/><rect x="13" y="6" width="1" height="5" fill="#fff"/><rect x="4" y="11" width="8" height="1" fill="#fff"/></svg><svg style="position:absolute;left:582px;top:47px" width="17" height="13" shape-rendering="crispEdges"><path d="M10 0 H16 L13 3 Z" fill="#a0a0a0"/><rect x="0" y="4" width="12" height="2" fill="#a0a0a0"/><rect x="11" y="5" width="2" height="5" fill="#a0a0a0"/><rect x="6" y="9" width="6" height="2" fill="#a0a0a0"/><rect x="0" y="9" width="3" height="2" fill="#a0a0a0"/><path d="M7 10 L3 6.5 V13.5 Z" fill="#a0a0a0"/><rect x="13" y="6" width="1" height="5" fill="#fff"/><rect x="6" y="11" width="6" height="1" fill="#fff"/></svg><svg style="position:absolute;left:612px;top:48px" width="16" height="15"><path d="M8 0 L10 5 L16 7 L10 9 L8 15 L6 9 L0 7 L6 5 Z" fill="#fff"/><path d="M6 5 Q4 6 1 7 M10 9 Q12 9 15 7 M9.5 4.5 Q9 2 8 1 M6.5 9.5 Q7 12 8 14" stroke="#0000a0" stroke-width="1.4" fill="none"/><rect x="0" y="7" width="16" height="1" fill="#000"/><rect x="7" y="0" width="1" height="15" fill="#000"/></svg><svg style="position:absolute;left:635px;top:48px" width="17" height="15"><rect x="1" y="6" width="5" height="1" fill="#909090"/><rect x="3" y="4" width="1" height="5" fill="#909090"/><path d="M7 2 L10 1 L11 5 L8 9" stroke="#000" stroke-width="1.2" fill="none"/><rect x="9" y="0" width="1" height="1" fill="#ffff00"/><rect x="9" y="2" width="1" height="1" fill="#ffff00"/><rect x="9" y="4" width="1" height="1" fill="#ffff00"/><rect x="11" y="0" width="1" height="1" fill="#ffff00"/><rect x="11" y="2" width="1" height="1" fill="#ffff00"/><rect x="11" y="4" width="1" height="1" fill="#ffff00"/><rect x="13" y="0" width="1" height="1" fill="#ffff00"/><rect x="13" y="2" width="1" height="1" fill="#ffff00"/><rect x="13" y="4" width="1" height="1" fill="#ffff00"/><rect x="15" y="0" width="1" height="1" fill="#ffff00"/><rect x="15" y="2" width="1" height="1" fill="#ffff00"/><rect x="15" y="4" width="1" height="1" fill="#ffff00"/><path d="M9 9 L15 3" stroke="#000" stroke-width="1.2"/><rect x="1" y="11" width="4" height="4" fill="#000"/><rect x="2" y="12" width="2" height="3" fill="#00a0a0"/><rect x="8" y="11" width="4" height="4" fill="#000"/><rect x="9" y="12" width="2" height="3" fill="#0000c0"/></svg><svg style="position:absolute;left:658px;top:48px" width="16" height="15"><rect x="0" y="0" width="8" height="1" fill="#808080"/><rect x="0" y="0" width="1" height="11" fill="#808080"/><rect x="1" y="1" width="8" height="10" fill="#fff"/><rect x="9" y="2" width="1" height="9" fill="#000"/><rect x="0" y="11" width="10" height="1" fill="#000"/><rect x="2" y="3" width="4" height="1" fill="#999"/><rect x="2" y="5" width="5" height="1" fill="#999"/><rect x="2" y="7" width="4" height="1" fill="#999"/><circle cx="10.5" cy="10" r="4.8" fill="#1030e0" stroke="#000" stroke-width="0.8"/><path d="M7 8 Q9 6 10 9 Q9 12 7 11 Z M12 7 Q14 8 13 10 Q12 12 11 10 Z" fill="#20c020"/></svg><svg style="position:absolute;left:689px;top:47px" width="17" height="16"><path d="M4.5 3 L7.5 0.5 L10.5 3" stroke="#000" fill="none"/><rect x="0" y="3" width="16" height="13" fill="#ffff00"/><rect x="0" y="3" width="1" height="1" fill="#fff"/><rect x="2" y="3" width="1" height="1" fill="#fff"/><rect x="4" y="3" width="1" height="1" fill="#fff"/><rect x="6" y="3" width="1" height="1" fill="#fff"/><rect x="8" y="3" width="1" height="1" fill="#fff"/><rect x="10" y="3" width="1" height="1" fill="#fff"/><rect x="12" y="3" width="1" height="1" fill="#fff"/><rect x="14" y="3" width="1" height="1" fill="#fff"/><rect x="0" y="3" width="1" height="1" fill="#fff"/><rect x="0" y="5" width="1" height="1" fill="#fff"/><rect x="0" y="7" width="1" height="1" fill="#fff"/><rect x="0" y="9" width="1" height="1" fill="#fff"/><rect x="0" y="11" width="1" height="1" fill="#fff"/><rect x="0" y="13" width="1" height="1" fill="#fff"/><rect x="0" y="15" width="1" height="1" fill="#fff"/><rect x="15" y="4" width="1" height="12" fill="#000"/><rect x="1" y="15" width="1" height="1" fill="#c00"/><rect x="3" y="15" width="1" height="1" fill="#c00"/><rect x="5" y="15" width="1" height="1" fill="#c00"/><rect x="7" y="15" width="1" height="1" fill="#c00"/><rect x="9" y="15" width="1" height="1" fill="#c00"/><rect x="11" y="15" width="1" height="1" fill="#c00"/><rect x="13" y="15" width="1" height="1" fill="#c00"/><rect x="15" y="15" width="1" height="1" fill="#c00"/><rect x="1" y="4" width="14" height="11" fill="#808000"/><rect x="2" y="5" width="12" height="9" fill="#00ffff"/><rect x="2" y="5" width="1" height="1" fill="#fff"/><rect x="2" y="7" width="1" height="1" fill="#fff"/><rect x="3" y="6" width="1" height="1" fill="#fff"/><rect x="3" y="8" width="1" height="1" fill="#fff"/><rect x="4" y="5" width="1" height="1" fill="#fff"/><rect x="4" y="7" width="1" height="1" fill="#fff"/><rect x="5" y="6" width="1" height="1" fill="#fff"/><rect x="5" y="8" width="1" height="1" fill="#fff"/><rect x="6" y="5" width="1" height="1" fill="#fff"/><rect x="6" y="7" width="1" height="1" fill="#fff"/><rect x="7" y="6" width="1" height="1" fill="#fff"/><rect x="7" y="8" width="1" height="1" fill="#fff"/><rect x="8" y="5" width="1" height="1" fill="#fff"/><rect x="8" y="7" width="1" height="1" fill="#fff"/><rect x="2" y="11" width="12" height="3" fill="#20c020"/><path d="M6 9 L9 6 L12 9 V13 H6 Z" fill="#fff"/><path d="M5 9 L9 5 L13 9" stroke="#e00000" stroke-width="1.3" fill="none"/><rect x="8" y="10" width="2" height="3" fill="#000"/><rect x="1" y="14" width="14" height="1" fill="#000"/></svg><div class="t " style="left:171.5px;top:87.48px;font-size:15.5px;line-height:15.5px;color:#000;font-weight:bold;font-family:'Liberation Serif',serif;">F</div><div class="t " style="left:196.5px;top:88.55px;font-size:14px;line-height:14px;color:#000;font-weight:bold;font-family:'Liberation Serif',serif;font-style:italic;">k</div><div class="t " style="left:218.3px;top:88.72px;font-size:13.8px;line-height:13.8px;color:#000;font-weight:bold;font-family:'Liberation Serif',serif;">U</div><div style="left:219px;top:101px;width:11px;height:1px;background:#000;"></div><div class="t " style="left:238.5px;top:85.63px;font-size:16.5px;line-height:16.5px;color:#000;font-weight:bold;font-family:'Liberation Serif',serif;">A</div><div style="left:239px;top:100px;width:17px;height:4px;background:#000;"></div><div style="left:240px;top:101px;width:15px;height:2px;background:#fff;"></div><svg style="position:absolute;left:247px;top:88px" width="10" height="5"><path d="M0 0 H9 L4.5 4 Z" fill="#000"/><path d="M2 1 H7 L4.5 3 Z" fill="#10e020"/></svg><svg style="position:absolute;left:272px;top:92px" width="12" height="9" shape-rendering="crispEdges"><rect x="0" y="0" width="12" height="1" fill="#000"/><rect x="0" y="2" width="9" height="1" fill="#000"/><rect x="0" y="4" width="12" height="1" fill="#000"/><rect x="0" y="6" width="9" height="1" fill="#000"/><rect x="0" y="8" width="12" height="1" fill="#000"/></svg><svg style="position:absolute;left:295px;top:92px" width="12" height="9" shape-rendering="crispEdges"><rect x="0" y="0" width="12" height="1" fill="#000"/><rect x="3" y="2" width="6" height="1" fill="#000"/><rect x="0" y="4" width="12" height="1" fill="#000"/><rect x="3" y="6" width="6" height="1" fill="#000"/><rect x="0" y="8" width="12" height="1" fill="#000"/></svg><svg style="position:absolute;left:318px;top:92px" width="12" height="9" shape-rendering="crispEdges"><rect x="0" y="0" width="12" height="1" fill="#000"/><rect x="3" y="2" width="9" height="1" fill="#000"/><rect x="0" y="4" width="12" height="1" fill="#000"/><rect x="3" y="6" width="9" height="1" fill="#000"/><rect x="0" y="8" width="12" height="1" fill="#000"/></svg><svg style="position:absolute;left:341px;top:92px" width="12" height="9" shape-rendering="crispEdges"><rect x="0" y="0" width="12" height="1" fill="#000"/><rect x="0" y="2" width="12" height="1" fill="#000"/><rect x="0" y="4" width="12" height="1" fill="#000"/><rect x="0" y="6" width="12" height="1" fill="#000"/><rect x="0" y="8" width="12" height="1" fill="#000"/></svg><svg style="position:absolute;left:372px;top:90px" width="13" height="11"><ellipse cx="3" cy="8" rx="2.6" ry="1.6" fill="#e8e800" stroke="#000" stroke-width="1"/><path d="M5.5 8 H8" stroke="#000" stroke-width="1.2"/><rect x="8" y="1.5" width="3.6" height="7.5" rx="1.5" fill="#c8c800" stroke="#000" stroke-width="1"/><path d="M9 3 V8" stroke="#ffff80" stroke-width="1"/></svg><div class="t " style="left:395px;top:89.97px;font-size:13.5px;line-height:13.5px;color:#000;font-weight:bold;">%</div><svg style="position:absolute;left:417px;top:91px" width="14" height="11"><text x="0" y="8" font-family="Liberation Sans" font-weight="bold" font-size="9">$</text><text x="6.5" y="7.5" font-family="Liberation Sans" font-weight="bold" font-size="7.5">%</text><path d="M2 10.5 H11 M2 10.5 L4 9 M2 10.5 L4 12" stroke="#0000c0" fill="none"/></svg><svg style="position:absolute;left:440px;top:91px" width="17" height="12"><text x="0.5" y="6" font-family="Liberation Sans" font-size="7" fill="#a0a0a0">0</text><path d="M5 2.5 H11.5 V5" stroke="#0000a0" stroke-width="1.3" fill="none"/><path d="M9.5 4 H13.5 L11.5 6 Z" fill="#0000a0"/><text x="0" y="11.5" font-family="Liberation Sans" font-weight="bold" font-size="7" letter-spacing="-0.2">.000</text></svg><svg style="position:absolute;left:463px;top:91px" width="16" height="12"><text x="0" y="6" font-family="Liberation Sans" font-weight="bold" font-size="7" letter-spacing="-0.2">.00</text><text x="10" y="6" font-family="Liberation Sans" font-size="7" fill="#a0a0a0">0</text><text x="0.5" y="11.5" font-family="Liberation Sans" font-weight="bold" font-size="7.5">0</text><path d="M12 7 V9.5 H6" stroke="#0000a0" stroke-width="1.3" fill="none"/><path d="M7 7.5 V11.5 L4.5 9.5 Z" fill="#0000a0"/></svg><svg style="position:absolute;left:492px;top:89px" width="17" height="15" shape-rendering="crispEdges"><rect x="6" y="0" width="1" height="15" fill="#000"/><rect x="4" y="2" width="9" height="1" fill="#000"/><rect x="7" y="4" width="6" height="1" fill="#000"/><rect x="7" y="6" width="3" height="1" fill="#000"/><rect x="7" y="8" width="6" height="1" fill="#000"/><rect x="4" y="10" width="9" height="1" fill="#000"/><rect x="6" y="12" width="1" height="0" fill="#000"/><path d="M0 6.5 L3 4 V9 Z" fill="#000080"/><rect x="2" y="6" width="5" height="1" fill="#000080"/></svg><svg style="position:absolute;left:516px;top:89px" width="17" height="15" shape-rendering="crispEdges"><rect x="6" y="0" width="1" height="15" fill="#000"/><rect x="4" y="2" width="9" height="1" fill="#000"/><rect x="7" y="4" width="6" height="1" fill="#000"/><rect x="7" y="6" width="3" height="1" fill="#000"/><rect x="7" y="8" width="6" height="1" fill="#000"/><rect x="4" y="10" width="9" height="1" fill="#000"/><rect x="6" y="12" width="1" height="0" fill="#000"/><path d="M0 6.5 L3 4 V9 Z" fill="#000080"/><rect x="2" y="6" width="5" height="1" fill="#000080"/></svg><svg style="position:absolute;left:548px;top:88px" width="17" height="15" shape-rendering="crispEdges"><rect x="1" y="3" width="10" height="1" fill="#0000a0"/><rect x="1" y="3" width="1" height="10" fill="#0000a0"/><rect x="10" y="3" width="1" height="10" fill="#0000a0"/><rect x="1" y="12" width="10" height="1" fill="#0000a0"/><path d="M8 0 H16 L12 4 Z" fill="#000"/><path d="M10 1 H14 L12 3 Z" fill="#10e020"/></svg><svg style="position:absolute;left:570px;top:88px" width="18" height="16" shape-rendering="crispEdges"><rect x="0" y="3" width="14" height="1" fill="#0000a0"/><rect x="0" y="3" width="1" height="9" fill="#0000a0"/><rect x="1" y="4" width="5" height="2" fill="#e8e8e8"/><rect x="6" y="4" width="7" height="1" fill="#0000a0"/><rect x="2" y="6" width="1" height="6" fill="#800080"/><rect x="5" y="6" width="1" height="6" fill="#800080"/><rect x="3" y="8" width="1" height="1" fill="#800080"/><rect x="0" y="12" width="17" height="3" fill="#c8c8c8"/><path d="M9 0 H17 L13 4 Z" fill="#000"/><path d="M11 1 H15 L13 3 Z" fill="#10e020"/></svg><svg style="position:absolute;left:601px;top:89px" width="16" height="15"><rect x="0" y="2" width="16" height="1" fill="#808080"/><rect x="0" y="12" width="16" height="1" fill="#808080"/><rect x="2" y="0" width="1" height="15" fill="#808080"/><rect x="13" y="0" width="1" height="15" fill="#808080"/><rect x="3" y="3" width="10" height="9" fill="#fff"/><rect x="4" y="4" width="3" height="1" fill="#000"/><rect x="4" y="6" width="5" height="1" fill="#000"/><rect x="10" y="5" width="1" height="6" fill="#000080"/><path d="M8.5 6 L10.5 3.5 L12.5 6 Z" fill="#000080"/></svg><svg style="position:absolute;left:624px;top:89px" width="16" height="15"><rect x="0" y="2" width="16" height="1" fill="#808080"/><rect x="0" y="12" width="16" height="1" fill="#808080"/><rect x="2" y="0" width="1" height="15" fill="#808080"/><rect x="13" y="0" width="1" height="15" fill="#808080"/><rect x="3" y="3" width="10" height="9" fill="#fff"/><rect x="4" y="6" width="3" height="1" fill="#000"/><rect x="4" y="8" width="5" height="1" fill="#000"/><rect x="10" y="5" width="1" height="6" fill="#000080"/><path d="M8.5 5 L10.5 3 L12.5 5 Z M8.5 10 L10.5 12 L12.5 10 Z" fill="#000080"/></svg><svg style="position:absolute;left:647px;top:89px" width="16" height="15"><rect x="0" y="2" width="16" height="1" fill="#808080"/><rect x="0" y="12" width="16" height="1" fill="#808080"/><rect x="2" y="0" width="1" height="15" fill="#808080"/><rect x="13" y="0" width="1" height="15" fill="#808080"/><rect x="3" y="3" width="10" height="9" fill="#fff"/><rect x="4" y="8" width="3" height="1" fill="#000"/><rect x="4" y="10" width="5" height="1" fill="#000"/><rect x="10" y="4" width="1" height="6" fill="#000080"/><path d="M8.5 9 L10.5 11.5 L12.5 9 Z" fill="#000080"/></svg><svg style="position:absolute;left:158px;top:120px" width="15" height="11"><rect x="0.5" y="0.5" width="13" height="9" rx="1.5" fill="#fff" stroke="#000"/><rect x="1" y="2" width="12" height="1" fill="#000"/><rect x="1" y="7" width="12" height="1" fill="#000"/><rect x="3" y="4" width="2" height="2" fill="#000"/><rect x="6" y="4" width="1" height="2" fill="#000"/><rect x="8" y="4" width="2" height="2" fill="#000"/><rect x="11" y="4" width="1" height="2" fill="#000"/></svg><div class="t " style="left:182px;top:117.80px;font-size:15px;line-height:15px;color:#000;font-weight:bold;font-family:'Liberation Serif',serif;">Σ</div><div style="left:206px;top:123px;width:9px;height:1px;background:#000;"></div><div style="left:206px;top:124px;width:9px;height:1px;background:#777;"></div><div style="left:206px;top:126px;width:9px;height:1px;background:#000;"></div><div style="left:206px;top:127px;width:9px;height:1px;background:#777;"></div><svg style="position:absolute;left:12px;top:148px" width="16" height="16" shape-rendering="crispEdges"><rect x="0" y="5" width="7" height="7" fill="#000"/><rect x="1" y="6" width="5" height="5" fill="#800080"/><rect x="1" y="6" width="1" height="1" fill="#c040c0"/><rect x="1" y="8" width="1" height="1" fill="#c040c0"/><rect x="1" y="10" width="1" height="1" fill="#c040c0"/><rect x="2" y="7" width="1" height="1" fill="#c040c0"/><rect x="2" y="9" width="1" height="1" fill="#c040c0"/><rect x="3" y="6" width="1" height="1" fill="#c040c0"/><rect x="3" y="8" width="1" height="1" fill="#c040c0"/><rect x="3" y="10" width="1" height="1" fill="#c040c0"/><rect x="4" y="7" width="1" height="1" fill="#c040c0"/><rect x="4" y="9" width="1" height="1" fill="#c040c0"/><rect x="5" y="6" width="1" height="1" fill="#c040c0"/><rect x="5" y="8" width="1" height="1" fill="#c040c0"/><rect x="5" y="10" width="1" height="1" fill="#c040c0"/><path d="M8 3 H11 V10 H8 Q6 7 8 3 Z" fill="#000"/><rect x="8" y="4" width="3" height="5" fill="#ffff00"/><rect x="8" y="4" width="1" height="1" fill="#fff"/><rect x="8" y="6" width="1" height="1" fill="#fff"/><rect x="8" y="8" width="1" height="1" fill="#fff"/><rect x="9" y="5" width="1" height="1" fill="#fff"/><rect x="9" y="7" width="1" height="1" fill="#fff"/><rect x="10" y="4" width="1" height="1" fill="#fff"/><rect x="10" y="6" width="1" height="1" fill="#fff"/><rect x="10" y="8" width="1" height="1" fill="#fff"/><path d="M1 15.5 L6.5 10 L12 15.5 Z" fill="#000"/><rect x="4" y="12" width="5" height="3" fill="#00e0e0"/><rect x="4" y="12" width="1" height="1" fill="#80ffff"/><rect x="4" y="14" width="1" height="1" fill="#80ffff"/><rect x="5" y="13" width="1" height="1" fill="#80ffff"/><rect x="6" y="12" width="1" height="1" fill="#80ffff"/><rect x="6" y="14" width="1" height="1" fill="#80ffff"/><rect x="7" y="13" width="1" height="1" fill="#80ffff"/><rect x="8" y="12" width="1" height="1" fill="#80ffff"/><rect x="8" y="14" width="1" height="1" fill="#80ffff"/></svg><svg style="position:absolute;left:23px;top:148px" width="5" height="7"><path d="M0 0 L4.5 3.5 L0 7 Z" fill="#000"/><path d="M1 1.8 L3.2 3.5 L1 5.2 Z" fill="#10e020"/></svg><svg style="position:absolute;left:12px;top:171px" width="15" height="16" shape-rendering="crispEdges"><rect x="0" y="1" width="11" height="15" fill="#000"/><rect x="1" y="2" width="3" height="4" fill="#fff"/><rect x="1" y="7" width="3" height="4" fill="#fff"/><rect x="1" y="12" width="3" height="4" fill="#fff"/><rect x="5" y="2" width="3" height="4" fill="#fff"/><rect x="5" y="7" width="3" height="4" fill="#fff"/><rect x="5" y="12" width="3" height="4" fill="#fff"/><rect x="9" y="2" width="3" height="4" fill="#fff"/><rect x="9" y="7" width="3" height="4" fill="#fff"/><rect x="9" y="12" width="3" height="4" fill="#fff"/><rect x="3" y="5" width="8" height="7" fill="#000080"/><rect x="4" y="6" width="6" height="5" fill="#ffff00"/><rect x="4" y="6" width="1" height="1" fill="#e0e0a0"/><rect x="4" y="8" width="1" height="1" fill="#e0e0a0"/><rect x="4" y="10" width="1" height="1" fill="#e0e0a0"/><rect x="5" y="7" width="1" height="1" fill="#e0e0a0"/><rect x="5" y="9" width="1" height="1" fill="#e0e0a0"/><rect x="6" y="6" width="1" height="1" fill="#e0e0a0"/><rect x="6" y="8" width="1" height="1" fill="#e0e0a0"/><rect x="6" y="10" width="1" height="1" fill="#e0e0a0"/><rect x="7" y="7" width="1" height="1" fill="#e0e0a0"/><rect x="7" y="9" width="1" height="1" fill="#e0e0a0"/><rect x="8" y="6" width="1" height="1" fill="#e0e0a0"/><rect x="8" y="8" width="1" height="1" fill="#e0e0a0"/><rect x="8" y="10" width="1" height="1" fill="#e0e0a0"/><rect x="9" y="7" width="1" height="1" fill="#e0e0a0"/><rect x="9" y="9" width="1" height="1" fill="#e0e0a0"/></svg><svg style="position:absolute;left:23px;top:171px" width="5" height="7"><path d="M0 0 L4.5 3.5 L0 7 Z" fill="#000"/><path d="M1 1.8 L3.2 3.5 L1 5.2 Z" fill="#10e020"/></svg><svg style="position:absolute;left:11px;top:194px" width="17" height="17"><circle cx="6.5" cy="9.5" r="6" fill="#000"/><path d="M6.5 9.5 L6.5 4.5 A5 5 0 0 0 2.5 12.5 Z" fill="#ffff40"/><path d="M6.5 9.5 L7.5 4.5 A5 5 0 0 1 11.5 9.5 Z" fill="#40e0e0"/><path d="M6.5 9.5 L11.5 10.5 A5 5 0 0 1 3 13.5 Z" fill="#802080"/></svg><svg style="position:absolute;left:23px;top:194px" width="5" height="7"><path d="M0 0 L4.5 3.5 L0 7 Z" fill="#000"/><path d="M1 1.8 L3.2 3.5 L1 5.2 Z" fill="#10e020"/></svg><svg style="position:absolute;left:12px;top:217px" width="14" height="16"><rect x="0" y="7" width="7" height="1" fill="#000"/><rect x="0" y="7" width="1" height="8" fill="#000"/><rect x="1" y="8" width="6" height="6" fill="#fff"/><rect x="0" y="14" width="3" height="1" fill="#000"/><path d="M3 15 L5 11 L11 5 L12.5 6.5 L6.5 12.5 Z" fill="#0000a0"/><path d="M5 12 L11 6" stroke="#6060ff" stroke-width="0.7"/></svg><svg style="position:absolute;left:23px;top:217px" width="5" height="7"><path d="M0 0 L4.5 3.5 L0 7 Z" fill="#000"/><path d="M1 1.8 L3.2 3.5 L1 5.2 Z" fill="#10e020"/></svg><svg style="position:absolute;left:12px;top:240px" width="15" height="17"><rect x="1" y="3" width="9" height="6" fill="#a8a8a8"/><rect x="1" y="3" width="9" height="1" fill="#f0f0f0"/><path d="M5 5 V11 L4 10 L3.5 12 L6 16 H12 L13 12 V9 L11 8 L9 8 V5 Z" fill="#ffff60" stroke="#000" stroke-width="0.9"/></svg><svg style="position:absolute;left:23px;top:240px" width="5" height="7"><path d="M0 0 L4.5 3.5 L0 7 Z" fill="#000"/><path d="M1 1.8 L3.2 3.5 L1 5.2 Z" fill="#10e020"/></svg><div style="left:8px;top:262px;width:23px;height:1px;background:#a0a0a0;"></div><div style="left:8px;top:263px;width:23px;height:1px;background:#fff;"></div><svg style="position:absolute;left:11px;top:271px" width="17" height="16" shape-rendering="crispEdges"><rect x="0" y="2" width="9" height="1" fill="#a0a0a0"/><rect x="0" y="2" width="1" height="13" fill="#a0a0a0"/><rect x="1" y="3" width="8" height="12" fill="#f0f0f0"/><rect x="9" y="2" width="1" height="14" fill="#a0a0a0"/><rect x="0" y="15" width="10" height="1" fill="#a0a0a0"/><rect x="2" y="5" width="2" height="1" fill="#a0a0a0"/><rect x="5" y="5" width="3" height="1" fill="#a0a0a0"/><rect x="2" y="7" width="2" height="1" fill="#a0a0a0"/><rect x="5" y="7" width="3" height="1" fill="#a0a0a0"/><rect x="2" y="9" width="2" height="1" fill="#a0a0a0"/><rect x="5" y="9" width="3" height="1" fill="#a0a0a0"/><rect x="2" y="11" width="2" height="1" fill="#a0a0a0"/><rect x="5" y="11" width="3" height="1" fill="#a0a0a0"/><rect x="2" y="13" width="2" height="1" fill="#a0a0a0"/><rect x="5" y="13" width="3" height="1" fill="#a0a0a0"/><rect x="13" y="0" width="1" height="8" fill="#a0a0a0"/><rect x="10" y="4" width="7" height="1" fill="#a0a0a0"/><rect x="12" y="3" width="3" height="3" fill="#a0a0a0"/></svg><svg style="position:absolute;left:11px;top:295px" width="16" height="16"><rect x="0" y="1" width="14" height="14" fill="#000080"/><rect x="1" y="2" width="12" height="12" fill="#fff"/><rect x="2" y="4" width="2" height="8" fill="#000080"/><rect x="2" y="12" width="10" height="1" fill="#ffff00"/><path d="M4 4 A3 3 0 0 1 9 3" stroke="#0000e0" stroke-width="2" fill="none"/><path d="M6 9 L11 0 L16 6 L10 13 Z" fill="#707070" stroke="#000" stroke-width="0.8"/><path d="M7 10 L12 3" stroke="#c00000" stroke-width="1.2"/><path d="M11 3 L14 6" stroke="#e0e0e0" stroke-width="1"/></svg><svg style="position:absolute;left:10px;top:317px" width="18" height="17"><text x="1" y="7" font-family="Liberation Sans" font-weight="bold" font-size="7.5" letter-spacing="0.4">ABC</text><path d="M1 10 L5 14 L16 8" stroke="#000080" stroke-width="2.2" fill="none"/></svg><svg style="position:absolute;left:10px;top:343px" width="18" height="12"><text x="1.5" y="7" font-family="Liberation Sans" font-weight="bold" font-size="7.5" letter-spacing="0.4">ABC</text><path d="M1 10 Q3 7 5 9.5 T9 9.5 T13 9.5 T17 10" stroke="#f00000" stroke-width="1" fill="none"/></svg><svg style="position:absolute;left:12px;top:366px" width="14" height="12" shape-rendering="crispEdges"><rect x="2" y="0" width="3" height="3" fill="#000"/><rect x="9" y="0" width="3" height="3" fill="#000"/><rect x="1" y="3" width="5" height="9" fill="#000"/><rect x="8" y="3" width="5" height="9" fill="#000"/><rect x="0" y="6" width="14" height="5" fill="#000"/><rect x="6" y="4" width="2" height="2" fill="#000"/><rect x="1" y="8" width="1" height="2" fill="#ffff00"/><rect x="7" y="7" width="1" height="2" fill="#ffff00"/><rect x="10" y="9" width="1" height="2" fill="#ffff00"/><rect x="3" y="1" width="1" height="1" fill="#fff"/><rect x="10" y="1" width="1" height="1" fill="#fff"/></svg><svg style="position:absolute;left:11px;top:388px" width="16" height="14" shape-rendering="crispEdges"><rect x="0" y="0" width="16" height="14" fill="#000"/><rect x="1" y="1" width="14" height="12" fill="#fff"/><rect x="1" y="1" width="3" height="12" fill="#d0d0d0"/><rect x="4" y="1" width="1" height="12" fill="#000"/><rect x="5" y="1" width="10" height="2" fill="#c0c0c0"/><rect x="5" y="3" width="10" height="1" fill="#808080"/><rect x="5" y="5" width="10" height="1" fill="#808080"/><rect x="5" y="7" width="10" height="1" fill="#808080"/><rect x="5" y="9" width="10" height="1" fill="#808080"/><rect x="5" y="11" width="10" height="1" fill="#808080"/><rect x="2" y="3" width="1" height="1" fill="#000"/><rect x="2" y="5" width="1" height="1" fill="#000"/><rect x="2" y="7" width="1" height="1" fill="#000"/><rect x="2" y="9" width="1" height="1" fill="#000"/><rect x="2" y="11" width="1" height="1" fill="#000"/></svg><div style="left:8px;top:408px;width:23px;height:1px;background:#a0a0a0;"></div><div style="left:8px;top:409px;width:23px;height:1px;background:#fff;"></div><svg style="position:absolute;left:11px;top:418px" width="17" height="15"><path d="M0.5 7.5 H12.5 L8.5 11.5 V14.5 H4.5 V11.5 Z" fill="#000"/><path d="M3 8.5 H10 L7.5 11 H5.5 Z" fill="#707000"/><rect x="5" y="12" width="3" height="1" fill="#fff"/><rect x="6" y="9" width="2" height="1" fill="#ffff60"/><rect x="13" y="0" width="1" height="8" fill="#a0a0a0"/><rect x="10" y="3" width="7" height="1" fill="#a0a0a0"/><rect x="12" y="2" width="3" height="3" fill="#a0a0a0"/></svg><svg style="position:absolute;left:11px;top:441px" width="17" height="16"><path d="M0 8 L3.5 0 H5.5 L9 8 H6.8 L6.1 6.3 H2.9 L2.2 8 Z M3.5 4.6 H5.5 L4.5 2 Z" fill="#000080" fill-rule="evenodd"/><path d="M2.5 8.8 L6.5 12.3" stroke="#000080" stroke-width="1.2"/><path d="M7.3 13 L3.8 12.6 L6.9 9.6 Z" fill="#000080"/><path d="M8.5 9.2 H16.5 V10.799999999999999 L11.1 14.1 H16.5 V15.7 H8.5 V14.1 L13.9 10.799999999999999 H8.5 Z" fill="#000"/></svg><svg style="position:absolute;left:11px;top:464px" width="17" height="16"><path d="M0.5 0 H7.5 V1.6 L3.1 3.9 H7.5 V5.5 H0.5 V3.9 L4.9 1.6 H0.5 Z" fill="#000080"/><path d="M2.5 7.8 L6.5 11.3" stroke="#000080" stroke-width="1.2"/><path d="M7.3 12 L3.8 11.6 L6.9 8.6 Z" fill="#000080"/><path d="M7 15 L10.5 7 H12.5 L16 15 H13.8 L13.1 13.3 H9.9 L9.2 15 Z M10.5 11.6 H12.5 L11.5 9 Z" fill="#000" fill-rule="evenodd"/></svg><div style="left:8px;top:485px;width:23px;height:1px;background:#a0a0a0;"></div><div style="left:8px;top:486px;width:23px;height:1px;background:#fff;"></div><svg style="position:absolute;left:12px;top:496px" width="15" height="14" shape-rendering="crispEdges"><rect x="0" y="0" width="14" height="4" fill="#000"/><rect x="1" y="1" width="5" height="2" fill="#fff"/><rect x="7" y="1" width="6" height="2" fill="#fff"/><rect x="0" y="5" width="8" height="8" fill="#000"/><rect x="1" y="6" width="6" height="2" fill="#fff"/><rect x="1" y="9" width="6" height="3" fill="#fff"/></svg><svg style="position:absolute;left:11px;top:519px" width="16" height="14"><rect x="0" y="0" width="15" height="4" fill="#a0a0a0"/><rect x="1" y="1" width="6" height="2" fill="#fff"/><rect x="8" y="1" width="6" height="2" fill="#fff"/><rect x="0" y="5" width="8" height="8" fill="#a0a0a0"/><rect x="1" y="6" width="6" height="2" fill="#fff"/><rect x="1" y="9" width="6" height="3" fill="#fff"/><path d="M9 6 L15 12 M15 6 L9 12" stroke="#909090" stroke-width="2.2"/></svg></div></body></html>
